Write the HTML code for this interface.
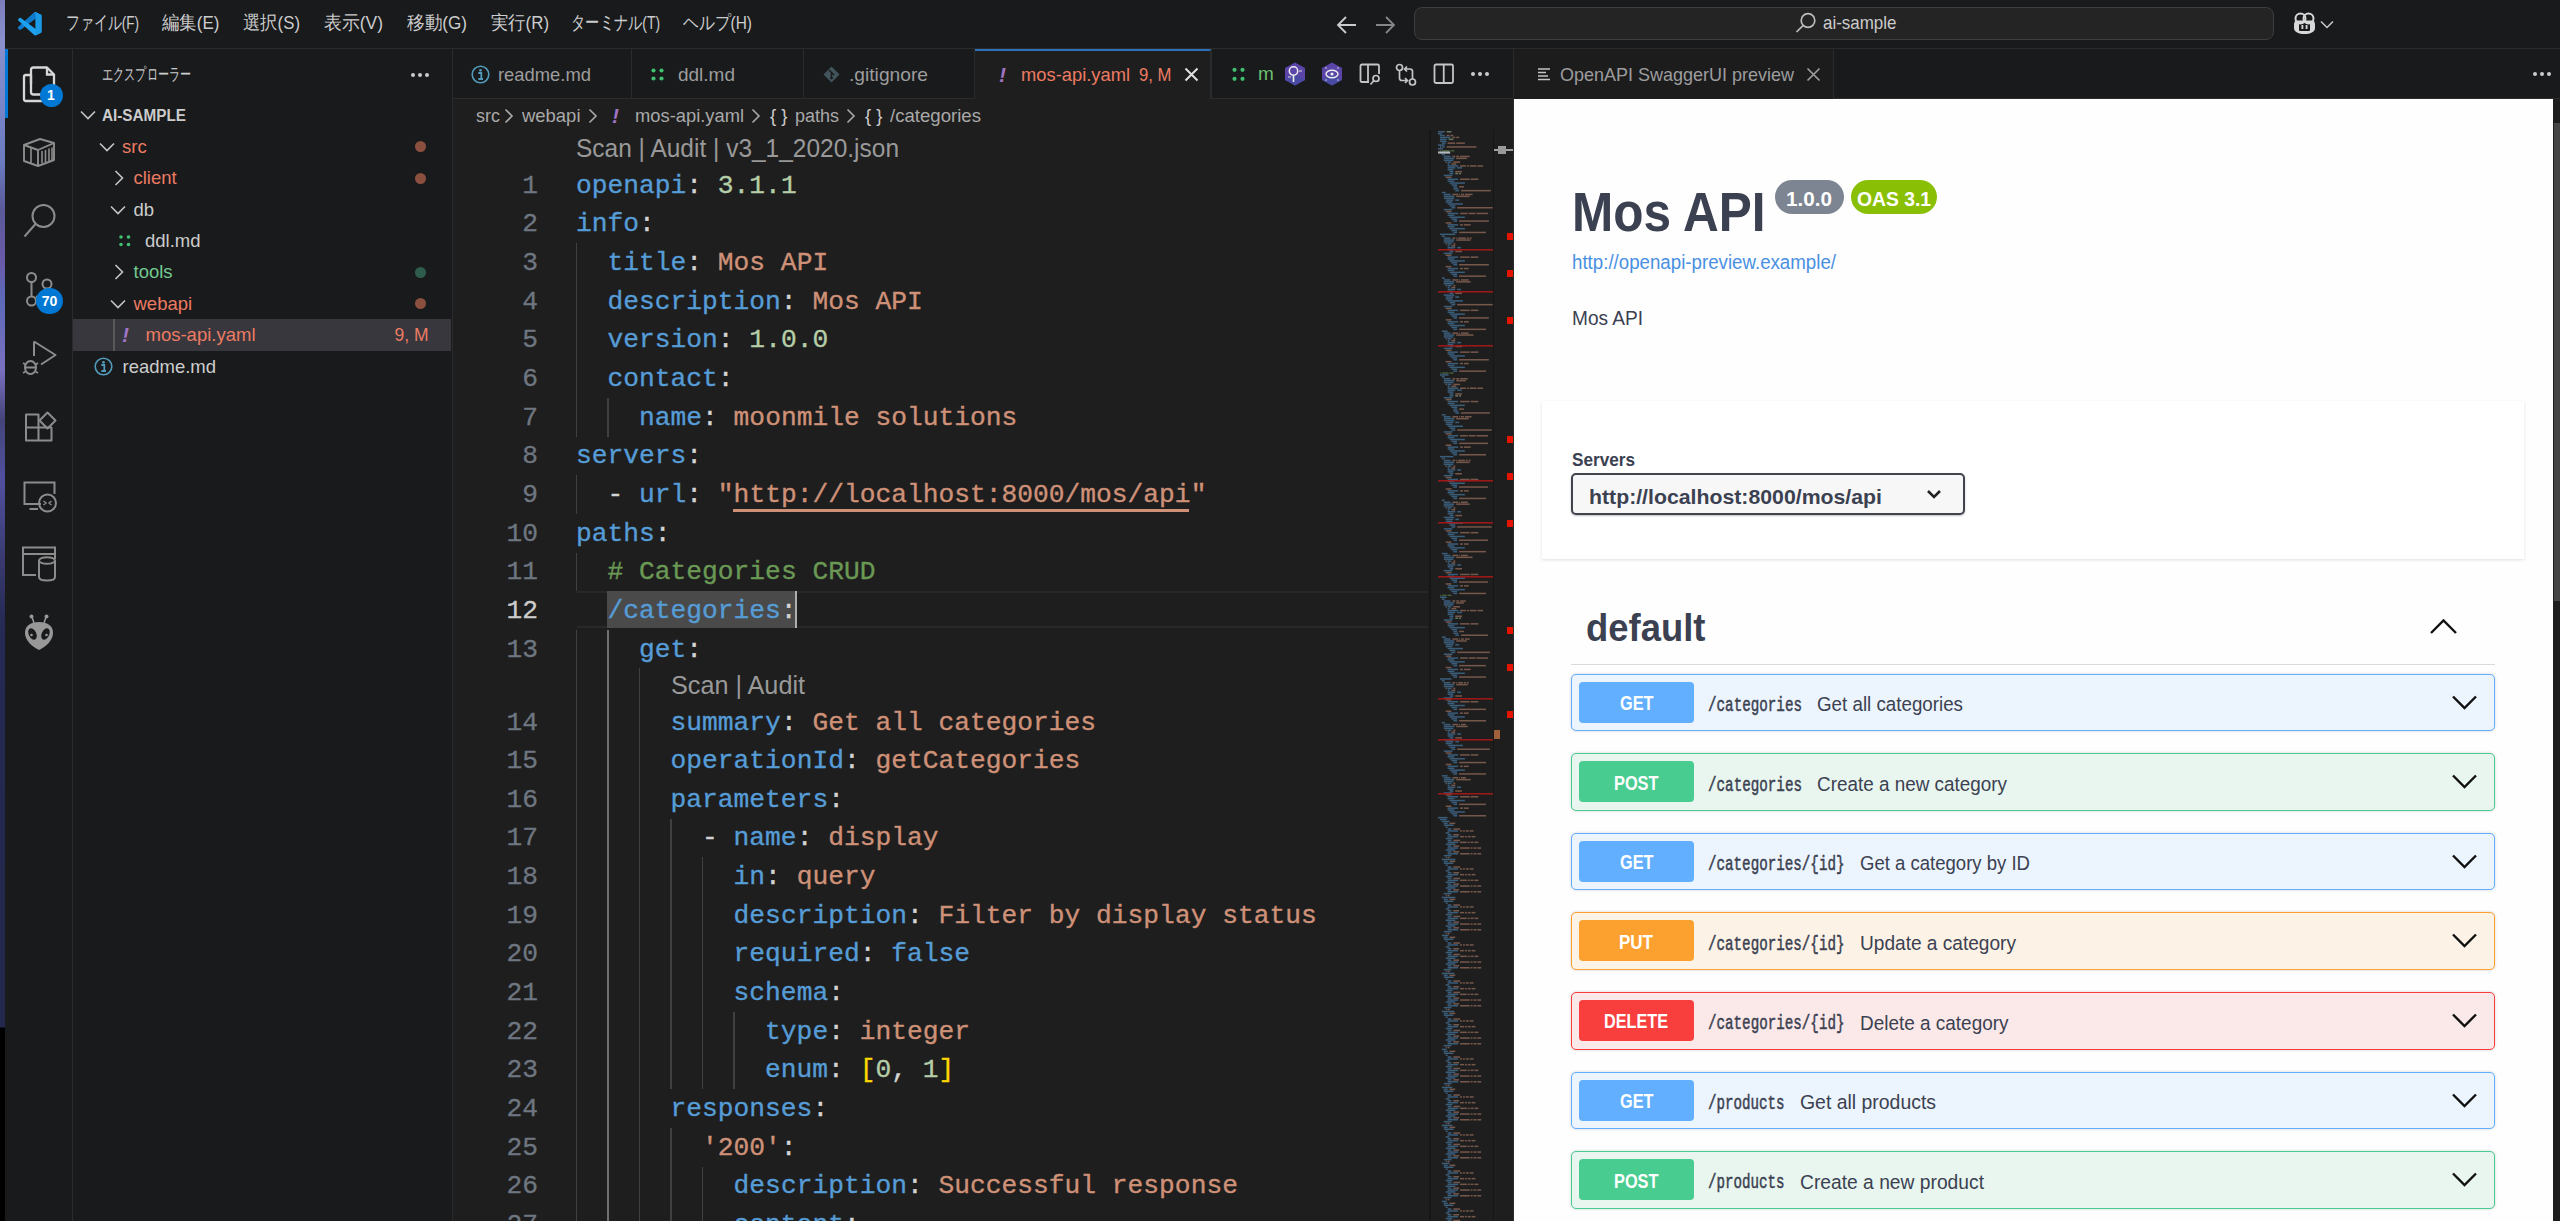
<!DOCTYPE html><html><head><meta charset="utf-8"><style>
*{margin:0;padding:0;box-sizing:border-box}
html,body{width:2560px;height:1221px;overflow:hidden;background:#1a1b1d;font-family:"Liberation Sans",sans-serif;}
.a{position:absolute}
.ui{font-size:18.5px;color:#cccccc;white-space:nowrap}
.mono{font-family:"Liberation Mono",monospace}
.code{font-family:"Liberation Mono",monospace;font-size:26.26px;-webkit-text-stroke:0.35px;white-space:pre;line-height:38.65px;height:38.65px;color:#d4d4d4}
.k{color:#569cd6}.s{color:#ce9178}.n{color:#b5cea8}.c{color:#6a9955}.p{color:#d4d4d4}.y{color:#ffd700}
.ln{font-family:"Liberation Mono",monospace;font-size:26.26px;-webkit-text-stroke:0.3px;color:#6e7681;text-align:right;width:80px;line-height:38.65px;height:38.65px}
.lens{font-size:25.5px;color:#999999;white-space:nowrap}
.fit{display:inline-block;transform-origin:0 50%;white-space:nowrap;overflow:visible}
.guide{position:absolute;width:1.5px;background:#404040}
svg{position:absolute;overflow:visible}
</style></head><body><div class="a" style="left:0;top:0;width:5px;height:1221px;background:linear-gradient(180deg,#7c7cbc 0px,#8a90cc 40px,#7a86c8 100px,#6b7cc0 160px,#5a5a9a 210px,#6a5aa8 260px,#5c6ab8 300px,#7a70c0 370px,#44447a 420px,#5050a0 480px,#3a3a70 560px,#262a55 620px,#23284e 800px,#24284c 1027px,#000 1028px,#000 1221px)"></div><div class="a" style="left:5px;top:0;width:2555px;height:49px;background:#191a1c;border-bottom:1px solid #2b2b2b"></div><div class="a" style="left:5px;top:49px;width:68px;height:1172px;background:#191a1c;border-right:1px solid #2b2b2b"></div><div class="a" style="left:5px;top:49px;width:3px;height:69px;background:#0078d4"></div><div class="a" style="left:73px;top:49px;width:380px;height:1172px;background:#191a1c;border-right:1px solid #2b2b2b"></div><div class="a" style="left:453px;top:49px;width:1060px;height:1172px;background:#1e1e1e"></div><div class="a" style="left:453px;top:49px;width:1060px;height:50px;background:#191a1c;border-bottom:1px solid #2b2b2b"></div><div class="a" style="left:1513px;top:49px;width:1047px;height:50px;background:#191a1c;border-bottom:1px solid #2b2b2b"></div><div class="a" id="sw" style="left:1513px;top:99px;width:1040px;height:1122px;background:#fefefe;overflow:hidden"></div><div class="a" style="left:2553px;top:99px;width:7px;height:1122px;background:#1e1e1e"></div><div class="a" style="left:2554px;top:123px;width:6px;height:478px;background:#464646"></div><svg style="left:18px;top:12px" width="23.5" height="23.5" viewBox="0 0 100 100">
<path d="M96.46 10.8 L75.86 0.87 C73.47 -0.28 70.62 0.2 68.75 2.08 L29.3 38.06 L12.12 25.01 C10.52 23.8 8.28 23.9 6.8 25.25 L1.28 30.27 C-0.53 31.93 -0.53 34.78 1.28 36.43 L16.18 50 L1.28 63.57 C-0.53 65.22 -0.53 68.07 1.28 69.73 L6.8 74.75 C8.28 76.1 10.52 76.2 12.12 74.99 L29.3 61.94 L68.75 97.92 C70.62 99.8 73.47 100.28 75.86 99.13 L96.46 89.2 C98.6 88.17 100 86 100 83.62 V16.38 C100 14 98.6 11.83 96.46 10.8 Z M75.01 72.7 L45.1 50 L75.01 27.3 Z" fill="#1ea2f0" fill-rule="evenodd"/>
<path d="M75.86 0.87 L96.46 10.8 C98.6 11.83 100 14 100 16.38 V83.62 C100 86 98.6 88.17 96.46 89.2 L75.86 99.13 C73.47 100.28 72 99 75 96 V4 C72 1 73.47 -0.28 75.86 0.87 Z" fill="#1b9be6"/>
<path d="M29.3 38.06 L68.75 2.08 L75 4 V27.3 L45.1 50 Z" fill="#0a6cc0" opacity="0.75"/><path d="M16.18 50 L1.28 63.57 C-0.53 65.22 -0.53 68.07 1.28 69.73 L6.8 74.75 C8.28 76.1 10.52 76.2 12.12 74.99 L29.3 61.94 L22 55 Z" fill="#0a6cc0" opacity="0.75"/>
</svg>
<div class="a ui" style="left:66px;top:11px;font-size:18.5px;line-height:24px;color:#cccccc"><span class="fit" style="width:73px">ファイル(F)</span></div>
<div class="a ui" style="left:162px;top:11px;font-size:18.5px;line-height:24px;color:#cccccc"><span class="fit" style="width:57.5px">編集(E)</span></div>
<div class="a ui" style="left:243px;top:11px;font-size:18.5px;line-height:24px;color:#cccccc"><span class="fit" style="width:57px">選択(S)</span></div>
<div class="a ui" style="left:324px;top:11px;font-size:18.5px;line-height:24px;color:#cccccc"><span class="fit" style="width:59px">表示(V)</span></div>
<div class="a ui" style="left:407px;top:11px;font-size:18.5px;line-height:24px;color:#cccccc"><span class="fit" style="width:60px">移動(G)</span></div>
<div class="a ui" style="left:491px;top:11px;font-size:18.5px;line-height:24px;color:#cccccc"><span class="fit" style="width:58px">実行(R)</span></div>
<div class="a ui" style="left:571px;top:11px;font-size:18.5px;line-height:24px;color:#cccccc"><span class="fit" style="width:89px">ターミナル(T)</span></div>
<div class="a ui" style="left:683px;top:11px;font-size:18.5px;line-height:24px;color:#cccccc"><span class="fit" style="width:69px">ヘルプ(H)</span></div>
<svg style="left:1336px;top:15px" width="22" height="20" viewBox="0 0 22 20"><path d="M10 2 L2 10 L10 18 M2 10 H20" stroke="#cccccc" stroke-width="1.8" fill="none"/></svg>
<svg style="left:1374px;top:15px" width="22" height="20" viewBox="0 0 22 20"><path d="M12 2 L20 10 L12 18 M20 10 H2" stroke="#868686" stroke-width="1.8" fill="none"/></svg>
<div class="a" style="left:1414px;top:7px;width:860px;height:33px;background:#242424;border:1.5px solid #3e3e3e;border-radius:8px"></div>
<svg style="left:1795px;top:12px" width="22" height="22" viewBox="0 0 22 22"><circle cx="13" cy="8.5" r="6.8" stroke="#bdbdbd" stroke-width="1.7" fill="none"/><path d="M8.2 13.3 L1.5 20" stroke="#bdbdbd" stroke-width="1.7"/></svg>
<div class="a ui" style="left:1823px;top:11px;line-height:24px;font-size:18.5px;color:#cccccc"><span class="fit" style="width:73.5px">ai-sample</span></div>
<svg style="left:2291px;top:12px" width="27" height="24" viewBox="0 0 27 24">
<path d="M3 13 C3 9 5 8.5 6.5 8.5 L20.5 8.5 C22 8.5 24 9 24 13 L24 16 C24 20 19 22 13.5 22 C8 22 3 20 3 16 Z" fill="#d8d8d8"/>
<rect x="8" y="11" width="11" height="8" rx="1" fill="#191a1c"/>
<rect x="10.5" y="13" width="1.8" height="4" fill="#d8d8d8"/><rect x="14.7" y="13" width="1.8" height="4" fill="#d8d8d8"/>
<ellipse cx="9.5" cy="6.5" rx="5" ry="5" fill="none" stroke="#d8d8d8" stroke-width="2"/>
<ellipse cx="17.5" cy="6.5" rx="5" ry="5" fill="none" stroke="#d8d8d8" stroke-width="2"/>
</svg>
<svg style="left:2320px;top:20px" width="14" height="9" viewBox="0 0 14 9"><path d="M1 1.5 L7 7.5 L13 1.5" stroke="#cccccc" stroke-width="1.5" fill="none"/></svg>
<svg style="left:20px;top:62px" width="40" height="44" viewBox="0 0 40 44">
<path d="M11 22 V8 Q11 5.5 13.5 5.5 H27 L34 12.5 V30" stroke="#d7d7d7" stroke-width="2.3" fill="none" stroke-linejoin="round"/>
<path d="M27 5.5 V12.5 H34" stroke="#d7d7d7" stroke-width="2.3" fill="none"/>
<path d="M11 13 H6 Q4 13 4 15 V37 Q4 39 6 39 H26" stroke="#d7d7d7" stroke-width="2.3" fill="none"/>
<path d="M11 13 V30 Q11 32.5 13.5 32.5 H22" stroke="#d7d7d7" stroke-width="2.3" fill="none"/>
</svg>
<div class="a" style="left:39.5px;top:84px;width:23px;height:23px;border-radius:50%;background:#0078d4;color:#fff;font:bold 14px/23px 'Liberation Sans',sans-serif;text-align:center">1</div>
<svg style="left:22px;top:137px" width="34" height="31" viewBox="0 0 34 31">
<path d="M2 8 L18 2 L32 6 V23 L16 29 L2 24 Z M2 8 L16 13 L32 6 M16 13 V29" stroke="#8c8c8c" stroke-width="1.9" fill="none" stroke-linejoin="round"/>
<path d="M9 11 V26 M20 14 V26 M23.5 13 V25 M27 11.5 V24 M30 10.5 V23" stroke="#8c8c8c" stroke-width="1.6"/>
</svg>
<svg style="left:22px;top:202px" width="36" height="38" viewBox="0 0 36 38"><circle cx="21.5" cy="14" r="11" stroke="#8c8c8c" stroke-width="2" fill="none"/><path d="M13.5 22 L2.5 34.5" stroke="#8c8c8c" stroke-width="2"/></svg>
<svg style="left:22px;top:270px" width="36" height="40" viewBox="0 0 36 40">
<circle cx="9.5" cy="7.5" r="4.5" stroke="#8c8c8c" stroke-width="2" fill="none"/>
<circle cx="25" cy="14" r="4.5" stroke="#8c8c8c" stroke-width="2" fill="none"/>
<circle cx="9.5" cy="31" r="4.5" stroke="#8c8c8c" stroke-width="2" fill="none"/>
<path d="M9.5 12 V26.5 M25 18.5 Q25 24 14 27" stroke="#8c8c8c" stroke-width="2" fill="none"/>
</svg>
<div class="a" style="left:36px;top:288px;width:27px;height:26px;border-radius:13px;background:#0078d4;color:#fff;font:bold 14px/26px 'Liberation Sans',sans-serif;text-align:center">70</div>
<svg style="left:20px;top:338px" width="40" height="40" viewBox="0 0 40 40">
<path d="M14 3.5 V18 M14 3.5 L35.5 17 L21 26.5" stroke="#8c8c8c" stroke-width="2" fill="none" stroke-linejoin="round"/>
<ellipse cx="10.5" cy="29.5" rx="5.5" ry="6.5" stroke="#8c8c8c" stroke-width="2" fill="none"/>
<path d="M5 29.5 H16 M3 25 L5.5 26.5 M18 25 L15.5 26.5 M3 35 L5.5 33.5 M18 35 L15.5 33.5" stroke="#8c8c8c" stroke-width="1.8" fill="none"/>
</svg>
<svg style="left:24px;top:411px" width="34" height="34" viewBox="0 0 34 34">
<path d="M2 3.5 H14.5 V29.5 H2 Z M2 16.5 H27.5 V29.5 H14.5 M14.5 16.5" stroke="#8c8c8c" stroke-width="2" fill="none" stroke-linejoin="round"/>
<path d="M23.5 1.5 L31.5 9.5 L23.5 17.5 L15.5 9.5 Z" stroke="#8c8c8c" stroke-width="2" fill="none" stroke-linejoin="round"/>
</svg>
<svg style="left:21px;top:480px" width="38" height="34" viewBox="0 0 38 34">
<path d="M20 24 H3.5 V2.5 H33.5 V14" stroke="#8c8c8c" stroke-width="2" fill="none"/>
<path d="M8.5 29 H17" stroke="#8c8c8c" stroke-width="2"/>
<circle cx="26.5" cy="23" r="8.5" stroke="#8c8c8c" stroke-width="2" fill="none"/>
<path d="M22.5 21 L25 23 L22.5 25 M30.5 21 L28 23 L30.5 25" stroke="#8c8c8c" stroke-width="1.4" fill="none"/>
</svg>
<svg style="left:20px;top:545px" width="38" height="38" viewBox="0 0 38 38">
<path d="M16 30 H3 V2.5 H35 V14" stroke="#8c8c8c" stroke-width="2" fill="none"/>
<path d="M3 9 H35" stroke="#8c8c8c" stroke-width="2"/>
<ellipse cx="27" cy="15.5" rx="8" ry="3.3" stroke="#8c8c8c" stroke-width="2" fill="none"/>
<path d="M19 15.5 V32 Q19 35.5 27 35.5 Q35 35.5 35 32 V15.5" stroke="#8c8c8c" stroke-width="2" fill="none"/>
</svg>
<svg style="left:23px;top:614px" width="32" height="38" viewBox="0 0 32 38">
<path d="M16 8 C25 8 30 12 30 19 C30 27 22 33 16 36 C10 33 2 27 2 19 C2 12 7 8 16 8 Z" fill="#989898"/>
<ellipse cx="9.5" cy="20" rx="3.8" ry="6" transform="rotate(-25 9.5 20)" fill="#191a1c"/>
<ellipse cx="22.5" cy="20" rx="3.8" ry="6" transform="rotate(25 22.5 20)" fill="#191a1c"/>
<circle cx="8.5" cy="21" r="1.3" fill="#989898"/><circle cx="23.5" cy="21" r="1.3" fill="#989898"/>
<path d="M9 3 L11 9 M23 3 L21 9" stroke="#989898" stroke-width="1.5"/>
<circle cx="8.5" cy="2.5" r="2" fill="#989898"/><circle cx="23.5" cy="2.5" r="2" fill="#989898"/>
</svg>
<div class="a ui" style="left:102px;top:64px;line-height:22px;font-size:17px;color:#cccccc"><span class="fit" style="width:89px">エクスプローラー</span></div>
<svg style="left:410px;top:72px" width="20" height="6" viewBox="0 0 20 6"><circle cx="3" cy="3" r="2" fill="#cccccc"/><circle cx="10" cy="3" r="2" fill="#cccccc"/><circle cx="17" cy="3" r="2" fill="#cccccc"/></svg>
<div class="a" style="left:73px;top:319.4px;width:378px;height:31.4px;background:#37373d"></div>
<div class="a" style="left:113px;top:319.4px;width:1.5px;height:31.4px;background:#585858"></div>
<svg style="left:80px;top:110.3px" width="16" height="10" viewBox="0 0 16 10"><path d="M1 1.5 L8 8.5 L15 1.5" stroke="#c5c5c5" stroke-width="1.6" fill="none"/></svg>
<div class="a ui" style="left:102px;top:104.3px;line-height:24px;color:#cccccc;font-weight:bold;font-size:16px"><span class="fit" style="width:84px">AI-SAMPLE</span></div>
<svg style="left:99px;top:141.7px" width="16" height="10" viewBox="0 0 16 10"><path d="M1 1.5 L8 8.5 L15 1.5" stroke="#c5c5c5" stroke-width="1.6" fill="none"/></svg>
<div class="a ui" style="left:122px;top:134.7px;line-height:24px;color:#ec7b63;">src</div>
<svg style="left:114px;top:170.09999999999997px" width="10" height="16" viewBox="0 0 10 16"><path d="M1.5 1 L8.5 8 L1.5 15" stroke="#c5c5c5" stroke-width="1.6" fill="none"/></svg>
<div class="a ui" style="left:133.5px;top:166.1px;line-height:24px;color:#ec7b63;">client</div>
<svg style="left:110px;top:204.49999999999997px" width="16" height="10" viewBox="0 0 16 10"><path d="M1 1.5 L8 8.5 L15 1.5" stroke="#c5c5c5" stroke-width="1.6" fill="none"/></svg>
<div class="a ui" style="left:133.5px;top:197.5px;line-height:24px;color:#cccccc;">db</div>
<svg style="left:118px;top:233.9px" width="14" height="14" viewBox="0 0 14 14"><circle cx="3" cy="3" r="1.8" fill="#3fbf6f"/><circle cx="10.5" cy="3" r="1.8" fill="#3fbf6f"/><circle cx="3" cy="10.5" r="1.8" fill="#3fbf6f"/><circle cx="10.5" cy="10.5" r="1.8" fill="#3fbf6f"/></svg>
<div class="a ui" style="left:145px;top:228.9px;line-height:24px;color:#cccccc;">ddl.md</div>
<svg style="left:114px;top:264.3px" width="10" height="16" viewBox="0 0 10 16"><path d="M1.5 1 L8.5 8 L1.5 15" stroke="#c5c5c5" stroke-width="1.6" fill="none"/></svg>
<div class="a ui" style="left:133.5px;top:260.3px;line-height:24px;color:#73c991;">tools</div>
<svg style="left:110px;top:298.7px" width="16" height="10" viewBox="0 0 16 10"><path d="M1 1.5 L8 8.5 L15 1.5" stroke="#c5c5c5" stroke-width="1.6" fill="none"/></svg>
<div class="a ui" style="left:133.5px;top:291.7px;line-height:24px;color:#ec7b63;">webapi</div>
<div class="a" style="left:122px;top:322.1px;font:italic bold 21px/26px 'Liberation Sans',sans-serif;color:#a074c4">!</div>
<div class="a ui" style="left:145.5px;top:323.1px;line-height:24px;color:#ec7b63;">mos-api.yaml</div>
<div class="a ui" style="left:394.5px;top:323.1px;line-height:24px;color:#ec7b63;font-size:17.5px">9, M</div>
<svg style="left:94px;top:357.0px" width="19" height="19" viewBox="0 0 19 19"><circle cx="9.5" cy="9.5" r="8.3" stroke="#519aba" stroke-width="1.6" fill="none"/><circle cx="9.5" cy="5.3" r="1.4" fill="#519aba"/><path d="M7.3 8 H10.3 V13.8 M7.3 14 H12" stroke="#519aba" stroke-width="1.8" fill="none"/></svg>
<div class="a ui" style="left:122.5px;top:354.5px;line-height:24px;color:#cccccc;">readme.md</div>
<div class="a" style="left:414.5px;top:141.2px;width:11px;height:11px;border-radius:50%;background:#8a4f3e"></div>
<div class="a" style="left:414.5px;top:172.6px;width:11px;height:11px;border-radius:50%;background:#8a4f3e"></div>
<div class="a" style="left:414.5px;top:266.8px;width:11px;height:11px;border-radius:50%;background:#2f5d4d"></div>
<div class="a" style="left:414.5px;top:298.2px;width:11px;height:11px;border-radius:50%;background:#8a4f3e"></div>
<div class="a" style="left:631px;top:49px;width:1px;height:49px;background:#2b2b2b"></div>
<div class="a" style="left:803px;top:49px;width:1px;height:49px;background:#2b2b2b"></div>
<div class="a" style="left:974px;top:49px;width:1px;height:49px;background:#2b2b2b"></div>
<div class="a" style="left:975px;top:49px;width:236px;height:50px;background:#1e1e1e;border-top:2px solid #2a70b8;border-right:1px solid #2b2b2b"></div>
<svg style="left:471px;top:65.0px" width="19" height="19" viewBox="0 0 19 19"><circle cx="9.5" cy="9.5" r="8.3" stroke="#519aba" stroke-width="1.6" fill="none"/><circle cx="9.5" cy="5.3" r="1.4" fill="#519aba"/><path d="M7.3 8 H10.3 V13.8 M7.3 14 H12" stroke="#519aba" stroke-width="1.8" fill="none"/></svg>
<div class="a ui" style="left:498px;top:62.5px;line-height:24px;font-size:18.5px;color:#9d9d9d;"><span class="fit" style="width:93px">readme.md</span></div>
<svg style="left:651px;top:68.0px" width="13" height="13" viewBox="0 0 13 13"><circle cx="2.5" cy="2.5" r="2.1" fill="#3fbf6f"/><circle cx="10.5" cy="2.5" r="2.1" fill="#3fbf6f"/><circle cx="2.5" cy="10.5" r="2.1" fill="#3fbf6f"/><circle cx="10.5" cy="10.5" r="2.1" fill="#3fbf6f"/></svg>
<div class="a ui" style="left:678px;top:62.5px;line-height:24px;font-size:18.5px;color:#9d9d9d;"><span class="fit" style="width:57px">ddl.md</span></div>
<svg style="left:823px;top:66.0px" width="17" height="17" viewBox="0 0 17 17"><path d="M8.5 0.5 L16.5 8.5 L8.5 16.5 L0.5 8.5 Z" fill="#41535b"/><path d="M6 4 L11 9 M8.5 6.5 V12.5" stroke="#191a1c" stroke-width="1.4"/><circle cx="8.5" cy="12" r="1.3" fill="#191a1c"/></svg>
<div class="a ui" style="left:849px;top:62.5px;line-height:24px;font-size:18.5px;color:#9d9d9d;"><span class="fit" style="width:79px">.gitignore</span></div>
<div class="a" style="left:999px;top:61.5px;font:italic bold 21px/26px 'Liberation Sans',sans-serif;color:#a074c4">!</div>
<div class="a ui" style="left:1021px;top:62.5px;line-height:24px;font-size:18.5px;color:#ec7b63;"><span class="fit" style="width:109px">mos-api.yaml</span></div>
<div class="a ui" style="left:1138.5px;top:62.5px;line-height:24px;font-size:17.5px;color:#ec7b63;"><span class="fit" style="width:32.5px">9, M</span></div>
<svg style="left:1184px;top:67.0px" width="15" height="15" viewBox="0 0 15 15"><path d="M1.5 1.5 L13.5 13.5 M13.5 1.5 L1.5 13.5" stroke="#e0e0e0" stroke-width="2"/></svg>
<div class="a" style="left:1211px;top:49px;width:1px;height:49px;background:#2b2b2b"></div>
<svg style="left:1232px;top:67px" width="13" height="15" viewBox="0 0 13 15"><circle cx="2.5" cy="2.8" r="2.1" fill="#3fbf6f"/><circle cx="10.5" cy="2.8" r="2.1" fill="#3fbf6f"/><circle cx="2.5" cy="11.8" r="2.1" fill="#3fbf6f"/><circle cx="10.5" cy="11.8" r="2.1" fill="#3fbf6f"/></svg>
<div class="a" style="left:1258px;top:62px;font:19px/24px 'Liberation Sans',sans-serif;color:#6cc06e">m</div>
<svg style="left:1284px;top:62px" width="22" height="24" viewBox="0 0 22 24"><path d="M11 0.5 L21 6 V18 L11 23.5 L1 18 V6 Z" fill="#5b45a8"/><path d="M11 12 L21 18 L11 23.5 L1 18 Z" fill="#3d4fa0" opacity="0.6"/><circle cx="9.5" cy="9" r="4.2" stroke="#eee" stroke-width="1.5" fill="none"/><path d="M9.5 13.2 V20" stroke="#eee" stroke-width="1.6"/><path d="M4 15 H7 M15 9 H18" stroke="#ddd" stroke-width="1"/></svg>
<svg style="left:1321px;top:62px" width="22" height="24" viewBox="0 0 22 24"><path d="M11 0.5 L21 6 V18 L11 23.5 L1 18 V6 Z" fill="#5b45a8"/><path d="M11 12 L21 18 L11 23.5 L1 18 Z" fill="#3d4fa0" opacity="0.6"/><ellipse cx="11" cy="12" rx="6" ry="3.8" stroke="#eee" stroke-width="1.4" fill="none"/><circle cx="11" cy="12" r="1.6" fill="#eee"/><circle cx="5" cy="6" r="0.8" fill="#ddd"/><circle cx="17" cy="6" r="0.8" fill="#ddd"/><circle cx="5" cy="18" r="0.8" fill="#ddd"/><circle cx="17" cy="18" r="0.8" fill="#ddd"/></svg>
<svg style="left:1359px;top:63px" width="23" height="23" viewBox="0 0 23 23"><path d="M10 19 H3 Q1.5 19 1.5 17.5 V3 Q1.5 1.5 3 1.5 H18.5 Q20 1.5 20 3 V11 M9 1.5 V19" stroke="#c5c5c5" stroke-width="1.8" fill="none"/><circle cx="17" cy="15.5" r="3" stroke="#c5c5c5" stroke-width="1.7" fill="none"/><path d="M14.8 17.8 L11.5 21.5" stroke="#c5c5c5" stroke-width="1.7"/></svg>
<svg style="left:1395px;top:63px" width="23" height="24" viewBox="0 0 23 24"><circle cx="4.5" cy="4.5" r="3" stroke="#c5c5c5" stroke-width="1.7" fill="none"/><circle cx="17.5" cy="19" r="3" stroke="#c5c5c5" stroke-width="1.7" fill="none"/><path d="M4.5 7.5 V15 Q4.5 17.5 7 17.5 H12 M10 15 L12.5 17.5 L10 20" stroke="#c5c5c5" stroke-width="1.7" fill="none"/><path d="M17.5 16 V8.5 Q17.5 6 15 6 H10 M12 3.5 L9.5 6 L12 8.5" stroke="#c5c5c5" stroke-width="1.7" fill="none"/></svg>
<svg style="left:1433px;top:63px" width="22" height="22" viewBox="0 0 22 22"><rect x="1.5" y="1.5" width="18.5" height="18.5" rx="1.5" stroke="#c5c5c5" stroke-width="1.8" fill="none"/><path d="M10.75 1.5 V20" stroke="#c5c5c5" stroke-width="1.8"/></svg>
<svg style="left:1470px;top:71px" width="20" height="6" viewBox="0 0 20 6"><circle cx="3" cy="3" r="2" fill="#cccccc"/><circle cx="10" cy="3" r="2" fill="#cccccc"/><circle cx="17" cy="3" r="2" fill="#cccccc"/></svg>
<div class="a" style="left:1513px;top:49px;width:1px;height:1172px;background:#2b2b2b"></div>
<div class="a" style="left:1514px;top:49px;width:320px;height:50px;background:#1c1c1d;border-right:1px solid #2b2b2b"></div>
<svg style="left:1537px;top:67px" width="14" height="15" viewBox="0 0 14 15"><path d="M1 2 H13 M1 5.5 H9 M1 9 H11 M1 12.5 H13" stroke="#c5c5c5" stroke-width="1.6"/></svg>
<div class="a ui" style="left:1559.5px;top:62.5px;line-height:24px;font-size:18.5px;color:#9d9d9d;"><span class="fit" style="width:234px">OpenAPI SwaggerUI preview</span></div>
<svg style="left:1806px;top:67.0px" width="15" height="15" viewBox="0 0 15 15"><path d="M1.5 1.5 L13.5 13.5 M13.5 1.5 L1.5 13.5" stroke="#9d9d9d" stroke-width="1.7"/></svg>
<svg style="left:2532px;top:71px" width="20" height="6" viewBox="0 0 20 6"><circle cx="3" cy="3" r="2" fill="#cccccc"/><circle cx="10" cy="3" r="2" fill="#cccccc"/><circle cx="17" cy="3" r="2" fill="#cccccc"/></svg>
<div class="a ui" style="left:475.5px;top:103.5px;line-height:24px;font-size:18.5px;color:#a9a9a9;"><span class="fit" style="width:24px">src</span></div>
<svg style="left:504px;top:107.5px" width="10" height="16" viewBox="0 0 10 16"><path d="M1.5 1.5 L8 8 L1.5 14.5" stroke="#a9a9a9" stroke-width="1.6" fill="none"/></svg>
<div class="a ui" style="left:521.5px;top:103.5px;line-height:24px;font-size:18.5px;color:#a9a9a9;"><span class="fit" style="width:58.5px">webapi</span></div>
<svg style="left:588px;top:107.5px" width="10" height="16" viewBox="0 0 10 16"><path d="M1.5 1.5 L8 8 L1.5 14.5" stroke="#a9a9a9" stroke-width="1.6" fill="none"/></svg>
<div class="a" style="left:612px;top:102.5px;font:italic bold 21px/26px 'Liberation Sans',sans-serif;color:#a074c4">!</div>
<div class="a ui" style="left:634.5px;top:103.5px;line-height:24px;font-size:18.5px;color:#a9a9a9;"><span class="fit" style="width:109px">mos-api.yaml</span></div>
<svg style="left:751px;top:107.5px" width="10" height="16" viewBox="0 0 10 16"><path d="M1.5 1.5 L8 8 L1.5 14.5" stroke="#a9a9a9" stroke-width="1.6" fill="none"/></svg>
<div class="a ui" style="left:770px;top:103.5px;line-height:24px;font-size:18.5px;color:#cccccc;"><span class="fit" style="width:17.5px">{ }</span></div>
<div class="a ui" style="left:795px;top:103.5px;line-height:24px;font-size:18.5px;color:#a9a9a9;"><span class="fit" style="width:44px">paths</span></div>
<svg style="left:846px;top:107.5px" width="10" height="16" viewBox="0 0 10 16"><path d="M1.5 1.5 L8 8 L1.5 14.5" stroke="#a9a9a9" stroke-width="1.6" fill="none"/></svg>
<div class="a ui" style="left:865px;top:103.5px;line-height:24px;font-size:18.5px;color:#cccccc;"><span class="fit" style="width:17.5px">{ }</span></div>
<div class="a ui" style="left:890px;top:103.5px;line-height:24px;font-size:18.5px;color:#a9a9a9;"><span class="fit" style="width:91px">/categories</span></div>
<div class="a" style="left:577px;top:591.1px;width:851px;height:37px;border-top:2px solid #282828;border-bottom:2px solid #282828"></div>
<div class="a" style="left:607px;top:591.1px;width:189px;height:37px;background:#4a4a4a"></div>
<div class="a" style="left:795px;top:591.1px;width:2px;height:37px;background:#aeafad"></div>
<div class="guide" style="left:575.5px;top:243.3px;height:38.65px;background:#404040"></div>
<div class="guide" style="left:575.5px;top:281.9px;height:38.65px;background:#404040"></div>
<div class="guide" style="left:575.5px;top:320.6px;height:38.65px;background:#404040"></div>
<div class="guide" style="left:575.5px;top:359.2px;height:38.65px;background:#404040"></div>
<div class="guide" style="left:575.5px;top:397.9px;height:38.65px;background:#404040"></div>
<div class="guide" style="left:607.0px;top:397.9px;height:38.65px;background:#404040"></div>
<div class="guide" style="left:575.5px;top:475.2px;height:38.65px;background:#404040"></div>
<div class="guide" style="left:575.5px;top:552.5px;height:38.65px;background:#404040"></div>
<div class="guide" style="left:575.5px;top:629.8px;height:38.65px;background:#404040"></div>
<div class="guide" style="left:607.0px;top:629.8px;height:38.65px;background:#707070"></div>
<div class="guide" style="left:575.5px;top:668.4px;height:73.00px;background:#404040"></div>
<div class="guide" style="left:607.0px;top:668.4px;height:73.00px;background:#707070"></div>
<div class="guide" style="left:638.5px;top:668.4px;height:73.00px;background:#404040"></div>
<div class="guide" style="left:575.5px;top:741.4px;height:38.65px;background:#404040"></div>
<div class="guide" style="left:607.0px;top:741.4px;height:38.65px;background:#707070"></div>
<div class="guide" style="left:638.5px;top:741.4px;height:38.65px;background:#404040"></div>
<div class="guide" style="left:575.5px;top:780.1px;height:38.65px;background:#404040"></div>
<div class="guide" style="left:607.0px;top:780.1px;height:38.65px;background:#707070"></div>
<div class="guide" style="left:638.5px;top:780.1px;height:38.65px;background:#404040"></div>
<div class="guide" style="left:575.5px;top:818.8px;height:38.65px;background:#404040"></div>
<div class="guide" style="left:607.0px;top:818.8px;height:38.65px;background:#707070"></div>
<div class="guide" style="left:638.5px;top:818.8px;height:38.65px;background:#404040"></div>
<div class="guide" style="left:670.1px;top:818.8px;height:38.65px;background:#404040"></div>
<div class="guide" style="left:575.5px;top:857.4px;height:38.65px;background:#404040"></div>
<div class="guide" style="left:607.0px;top:857.4px;height:38.65px;background:#707070"></div>
<div class="guide" style="left:638.5px;top:857.4px;height:38.65px;background:#404040"></div>
<div class="guide" style="left:670.1px;top:857.4px;height:38.65px;background:#404040"></div>
<div class="guide" style="left:701.6px;top:857.4px;height:38.65px;background:#404040"></div>
<div class="guide" style="left:575.5px;top:896.0px;height:38.65px;background:#404040"></div>
<div class="guide" style="left:607.0px;top:896.0px;height:38.65px;background:#707070"></div>
<div class="guide" style="left:638.5px;top:896.0px;height:38.65px;background:#404040"></div>
<div class="guide" style="left:670.1px;top:896.0px;height:38.65px;background:#404040"></div>
<div class="guide" style="left:701.6px;top:896.0px;height:38.65px;background:#404040"></div>
<div class="guide" style="left:575.5px;top:934.7px;height:38.65px;background:#404040"></div>
<div class="guide" style="left:607.0px;top:934.7px;height:38.65px;background:#707070"></div>
<div class="guide" style="left:638.5px;top:934.7px;height:38.65px;background:#404040"></div>
<div class="guide" style="left:670.1px;top:934.7px;height:38.65px;background:#404040"></div>
<div class="guide" style="left:701.6px;top:934.7px;height:38.65px;background:#404040"></div>
<div class="guide" style="left:575.5px;top:973.3px;height:38.65px;background:#404040"></div>
<div class="guide" style="left:607.0px;top:973.3px;height:38.65px;background:#707070"></div>
<div class="guide" style="left:638.5px;top:973.3px;height:38.65px;background:#404040"></div>
<div class="guide" style="left:670.1px;top:973.3px;height:38.65px;background:#404040"></div>
<div class="guide" style="left:701.6px;top:973.3px;height:38.65px;background:#404040"></div>
<div class="guide" style="left:575.5px;top:1012.0px;height:38.65px;background:#404040"></div>
<div class="guide" style="left:607.0px;top:1012.0px;height:38.65px;background:#707070"></div>
<div class="guide" style="left:638.5px;top:1012.0px;height:38.65px;background:#404040"></div>
<div class="guide" style="left:670.1px;top:1012.0px;height:38.65px;background:#404040"></div>
<div class="guide" style="left:701.6px;top:1012.0px;height:38.65px;background:#404040"></div>
<div class="guide" style="left:733.1px;top:1012.0px;height:38.65px;background:#404040"></div>
<div class="guide" style="left:575.5px;top:1050.6px;height:38.65px;background:#404040"></div>
<div class="guide" style="left:607.0px;top:1050.6px;height:38.65px;background:#707070"></div>
<div class="guide" style="left:638.5px;top:1050.6px;height:38.65px;background:#404040"></div>
<div class="guide" style="left:670.1px;top:1050.6px;height:38.65px;background:#404040"></div>
<div class="guide" style="left:701.6px;top:1050.6px;height:38.65px;background:#404040"></div>
<div class="guide" style="left:733.1px;top:1050.6px;height:38.65px;background:#404040"></div>
<div class="guide" style="left:575.5px;top:1089.3px;height:38.65px;background:#404040"></div>
<div class="guide" style="left:607.0px;top:1089.3px;height:38.65px;background:#707070"></div>
<div class="guide" style="left:638.5px;top:1089.3px;height:38.65px;background:#404040"></div>
<div class="guide" style="left:575.5px;top:1127.9px;height:38.65px;background:#404040"></div>
<div class="guide" style="left:607.0px;top:1127.9px;height:38.65px;background:#707070"></div>
<div class="guide" style="left:638.5px;top:1127.9px;height:38.65px;background:#404040"></div>
<div class="guide" style="left:670.1px;top:1127.9px;height:38.65px;background:#404040"></div>
<div class="guide" style="left:575.5px;top:1166.6px;height:38.65px;background:#404040"></div>
<div class="guide" style="left:607.0px;top:1166.6px;height:38.65px;background:#707070"></div>
<div class="guide" style="left:638.5px;top:1166.6px;height:38.65px;background:#404040"></div>
<div class="guide" style="left:670.1px;top:1166.6px;height:38.65px;background:#404040"></div>
<div class="guide" style="left:701.6px;top:1166.6px;height:38.65px;background:#404040"></div>
<div class="guide" style="left:575.5px;top:1205.2px;height:38.65px;background:#404040"></div>
<div class="guide" style="left:607.0px;top:1205.2px;height:38.65px;background:#707070"></div>
<div class="guide" style="left:638.5px;top:1205.2px;height:38.65px;background:#404040"></div>
<div class="guide" style="left:670.1px;top:1205.2px;height:38.65px;background:#404040"></div>
<div class="guide" style="left:701.6px;top:1205.2px;height:38.65px;background:#404040"></div>
<div class="a ln" style="left:458px;top:166.70px;color:#6e7681">1</div>
<div class="a code" style="left:576.0px;top:166.70px"><span class="fit" style="width:220.64px;white-space:pre"><span class="k">openapi</span><span class="p">: </span><span class="n">3.1.1</span></span></div>
<div class="a ln" style="left:458px;top:205.35px;color:#6e7681">2</div>
<div class="a code" style="left:576.0px;top:205.35px"><span class="fit" style="width:78.80px;white-space:pre"><span class="k">info</span><span class="p">:</span></span></div>
<div class="a ln" style="left:458px;top:244.00px;color:#6e7681">3</div>
<div class="a code" style="left:576.0px;top:244.00px"><span class="fit" style="width:252.16px;white-space:pre"><span class="p">  </span><span class="k">title</span><span class="p">: </span><span class="s">Mos API</span></span></div>
<div class="a ln" style="left:458px;top:282.65px;color:#6e7681">4</div>
<div class="a code" style="left:576.0px;top:282.65px"><span class="fit" style="width:346.72px;white-space:pre"><span class="p">  </span><span class="k">description</span><span class="p">: </span><span class="s">Mos API</span></span></div>
<div class="a ln" style="left:458px;top:321.30px;color:#6e7681">5</div>
<div class="a code" style="left:576.0px;top:321.30px"><span class="fit" style="width:252.16px;white-space:pre"><span class="p">  </span><span class="k">version</span><span class="p">: </span><span class="n">1.0.0</span></span></div>
<div class="a ln" style="left:458px;top:359.95px;color:#6e7681">6</div>
<div class="a code" style="left:576.0px;top:359.95px"><span class="fit" style="width:157.60px;white-space:pre"><span class="p">  </span><span class="k">contact</span><span class="p">:</span></span></div>
<div class="a ln" style="left:458px;top:398.60px;color:#6e7681">7</div>
<div class="a code" style="left:576.0px;top:398.60px"><span class="fit" style="width:441.28px;white-space:pre"><span class="p">    </span><span class="k">name</span><span class="p">: </span><span class="s">moonmile solutions</span></span></div>
<div class="a ln" style="left:458px;top:437.25px;color:#6e7681">8</div>
<div class="a code" style="left:576.0px;top:437.25px"><span class="fit" style="width:126.08px;white-space:pre"><span class="k">servers</span><span class="p">:</span></span></div>
<div class="a ln" style="left:458px;top:475.90px;color:#6e7681">9</div>
<div class="a code" style="left:576.0px;top:475.90px"><span class="fit" style="width:630.40px;white-space:pre"><span class="p">  - </span><span class="k">url</span><span class="p">: </span><span class="s">&quot;</span><span class="s">http://localhost:8000/mos/api</span><span class="s">&quot;</span></span></div>
<div class="a ln" style="left:458px;top:514.55px;color:#6e7681">10</div>
<div class="a code" style="left:576.0px;top:514.55px"><span class="fit" style="width:94.56px;white-space:pre"><span class="k">paths</span><span class="p">:</span></span></div>
<div class="a ln" style="left:458px;top:553.20px;color:#6e7681">11</div>
<div class="a code" style="left:576.0px;top:553.20px"><span class="fit" style="width:299.44px;white-space:pre"><span class="p">  </span><span class="c"># Categories CRUD</span></span></div>
<div class="a ln" style="left:458px;top:591.85px;color:#cccccc">12</div>
<div class="a code" style="left:576.0px;top:591.85px"><span class="fit" style="width:220.64px;white-space:pre"><span class="p">  </span><span class="k">/categories</span><span class="p">:</span></span></div>
<div class="a ln" style="left:458px;top:630.50px;color:#6e7681">13</div>
<div class="a code" style="left:576.0px;top:630.50px"><span class="fit" style="width:126.08px;white-space:pre"><span class="p">    </span><span class="k">get</span><span class="p">:</span></span></div>
<div class="a ln" style="left:458px;top:703.50px;color:#6e7681">14</div>
<div class="a code" style="left:576.0px;top:703.50px"><span class="fit" style="width:520.08px;white-space:pre"><span class="p">      </span><span class="k">summary</span><span class="p">: </span><span class="s">Get all categories</span></span></div>
<div class="a ln" style="left:458px;top:742.15px;color:#6e7681">15</div>
<div class="a code" style="left:576.0px;top:742.15px"><span class="fit" style="width:504.32px;white-space:pre"><span class="p">      </span><span class="k">operationId</span><span class="p">: </span><span class="s">getCategories</span></span></div>
<div class="a ln" style="left:458px;top:780.80px;color:#6e7681">16</div>
<div class="a code" style="left:576.0px;top:780.80px"><span class="fit" style="width:267.92px;white-space:pre"><span class="p">      </span><span class="k">parameters</span><span class="p">:</span></span></div>
<div class="a ln" style="left:458px;top:819.45px;color:#6e7681">17</div>
<div class="a code" style="left:576.0px;top:819.45px"><span class="fit" style="width:362.48px;white-space:pre"><span class="p">        - </span><span class="k">name</span><span class="p">: </span><span class="s">display</span></span></div>
<div class="a ln" style="left:458px;top:858.10px;color:#6e7681">18</div>
<div class="a code" style="left:576.0px;top:858.10px"><span class="fit" style="width:299.44px;white-space:pre"><span class="p">          </span><span class="k">in</span><span class="p">: </span><span class="s">query</span></span></div>
<div class="a ln" style="left:458px;top:896.75px;color:#6e7681">19</div>
<div class="a code" style="left:576.0px;top:896.75px"><span class="fit" style="width:740.72px;white-space:pre"><span class="p">          </span><span class="k">description</span><span class="p">: </span><span class="s">Filter by display status</span></span></div>
<div class="a ln" style="left:458px;top:935.40px;color:#6e7681">20</div>
<div class="a code" style="left:576.0px;top:935.40px"><span class="fit" style="width:394.00px;white-space:pre"><span class="p">          </span><span class="k">required</span><span class="p">: </span><span class="k">false</span></span></div>
<div class="a ln" style="left:458px;top:974.05px;color:#6e7681">21</div>
<div class="a code" style="left:576.0px;top:974.05px"><span class="fit" style="width:267.92px;white-space:pre"><span class="p">          </span><span class="k">schema</span><span class="p">:</span></span></div>
<div class="a ln" style="left:458px;top:1012.70px;color:#6e7681">22</div>
<div class="a code" style="left:576.0px;top:1012.70px"><span class="fit" style="width:394.00px;white-space:pre"><span class="p">            </span><span class="k">type</span><span class="p">: </span><span class="s">integer</span></span></div>
<div class="a ln" style="left:458px;top:1051.35px;color:#6e7681">23</div>
<div class="a code" style="left:576.0px;top:1051.35px"><span class="fit" style="width:378.24px;white-space:pre"><span class="p">            </span><span class="k">enum</span><span class="p">: </span><span class="y">[</span><span class="n">0</span><span class="p">, </span><span class="n">1</span><span class="y">]</span></span></div>
<div class="a ln" style="left:458px;top:1090.00px;color:#6e7681">24</div>
<div class="a code" style="left:576.0px;top:1090.00px"><span class="fit" style="width:252.16px;white-space:pre"><span class="p">      </span><span class="k">responses</span><span class="p">:</span></span></div>
<div class="a ln" style="left:458px;top:1128.65px;color:#6e7681">25</div>
<div class="a code" style="left:576.0px;top:1128.65px"><span class="fit" style="width:220.64px;white-space:pre"><span class="p">        </span><span class="s">&#x27;200&#x27;</span><span class="p">:</span></span></div>
<div class="a ln" style="left:458px;top:1167.30px;color:#6e7681">26</div>
<div class="a code" style="left:576.0px;top:1167.30px"><span class="fit" style="width:661.92px;white-space:pre"><span class="p">          </span><span class="k">description</span><span class="p">: </span><span class="s">Successful response</span></span></div>
<div class="a ln" style="left:458px;top:1205.95px;color:#6e7681">27</div>
<div class="a code" style="left:576.0px;top:1205.95px"><span class="fit" style="width:283.68px;white-space:pre"><span class="p">          </span><span class="k">content</span><span class="p">:</span></span></div>
<div class="a" style="left:732.5px;top:509px;width:456px;height:2.6px;background:#ce9178"></div>
<div class="a lens" style="left:576px;top:130px;line-height:36px"><span class="fit" style="width:323px">Scan | Audit | v3_1_2020.json</span></div>
<div class="a lens" style="left:670.5px;top:667px;line-height:36px"><span class="fit" style="width:134px">Scan | Audit</span></div>
<svg style="left:0;top:0" width="2560" height="1221" viewBox="0 0 2560 1221"><g opacity="0.5"><rect x="1438.00" y="131.00" width="6.72" height="1.5" fill="#569cd6"/><rect x="1446.64" y="131.00" width="4.80" height="1.5" fill="#b5cea8"/><rect x="1438.00" y="132.90" width="3.84" height="1.5" fill="#569cd6"/><rect x="1439.92" y="134.80" width="4.80" height="1.5" fill="#569cd6"/><rect x="1446.64" y="134.80" width="2.88" height="1.5" fill="#ce9178"/><rect x="1450.48" y="134.80" width="2.88" height="1.5" fill="#ce9178"/><rect x="1439.92" y="136.70" width="10.56" height="1.5" fill="#569cd6"/><rect x="1452.40" y="136.70" width="2.88" height="1.5" fill="#ce9178"/><rect x="1456.24" y="136.70" width="2.88" height="1.5" fill="#ce9178"/><rect x="1439.92" y="138.60" width="6.72" height="1.5" fill="#569cd6"/><rect x="1448.56" y="138.60" width="4.80" height="1.5" fill="#b5cea8"/><rect x="1439.92" y="140.50" width="6.72" height="1.5" fill="#569cd6"/><rect x="1441.84" y="142.40" width="3.84" height="1.5" fill="#569cd6"/><rect x="1447.60" y="142.40" width="7.68" height="1.5" fill="#ce9178"/><rect x="1456.24" y="142.40" width="8.64" height="1.5" fill="#ce9178"/><rect x="1438.00" y="144.30" width="6.72" height="1.5" fill="#569cd6"/><rect x="1439.92" y="146.20" width="0.96" height="1.5" fill="#d4d4d4"/><rect x="1441.84" y="146.20" width="2.88" height="1.5" fill="#569cd6"/><rect x="1446.64" y="146.20" width="29.76" height="1.5" fill="#ce9178"/><rect x="1438.00" y="148.10" width="4.80" height="1.5" fill="#569cd6"/><rect x="1439.92" y="150.00" width="0.96" height="1.5" fill="#6a9955"/><rect x="1441.84" y="150.00" width="7.68" height="1.5" fill="#6a9955"/><rect x="1450.48" y="150.00" width="3.84" height="1.5" fill="#6a9955"/><rect x="1439.92" y="151.90" width="10.56" height="1.5" fill="#569cd6"/><rect x="1441.84" y="153.80" width="2.88" height="1.5" fill="#569cd6"/><rect x="1443.76" y="155.70" width="6.72" height="1.5" fill="#569cd6"/><rect x="1452.40" y="155.70" width="2.88" height="1.5" fill="#ce9178"/><rect x="1456.24" y="155.70" width="2.88" height="1.5" fill="#ce9178"/><rect x="1460.08" y="155.70" width="9.60" height="1.5" fill="#ce9178"/><rect x="1443.76" y="157.60" width="10.56" height="1.5" fill="#569cd6"/><rect x="1456.24" y="157.60" width="10.56" height="1.5" fill="#ce9178"/><rect x="1443.76" y="159.50" width="9.60" height="1.5" fill="#569cd6"/><rect x="1445.68" y="161.40" width="0.96" height="1.5" fill="#d4d4d4"/><rect x="1447.60" y="161.40" width="3.84" height="1.5" fill="#569cd6"/><rect x="1453.36" y="161.40" width="6.72" height="1.5" fill="#ce9178"/><rect x="1447.60" y="163.30" width="1.92" height="1.5" fill="#569cd6"/><rect x="1451.44" y="163.30" width="4.80" height="1.5" fill="#ce9178"/><rect x="1447.60" y="165.20" width="10.56" height="1.5" fill="#569cd6"/><rect x="1460.08" y="165.20" width="5.76" height="1.5" fill="#ce9178"/><rect x="1466.80" y="165.20" width="1.92" height="1.5" fill="#ce9178"/><rect x="1469.68" y="165.20" width="6.72" height="1.5" fill="#ce9178"/><rect x="1477.36" y="165.20" width="5.76" height="1.5" fill="#ce9178"/><rect x="1447.60" y="167.10" width="7.68" height="1.5" fill="#569cd6"/><rect x="1457.20" y="167.10" width="4.80" height="1.5" fill="#569cd6"/><rect x="1447.60" y="169.00" width="5.76" height="1.5" fill="#569cd6"/><rect x="1449.52" y="170.90" width="3.84" height="1.5" fill="#569cd6"/><rect x="1455.28" y="170.90" width="6.72" height="1.5" fill="#ce9178"/><rect x="1449.52" y="172.80" width="3.84" height="1.5" fill="#569cd6"/><rect x="1455.28" y="172.80" width="2.88" height="1.5" fill="#b5cea8"/><rect x="1459.12" y="172.80" width="1.92" height="1.5" fill="#b5cea8"/><rect x="1443.76" y="174.70" width="8.64" height="1.5" fill="#569cd6"/><rect x="1445.68" y="176.60" width="5.76" height="1.5" fill="#ce9178"/><rect x="1447.60" y="178.50" width="10.56" height="1.5" fill="#569cd6"/><rect x="1460.08" y="178.50" width="9.60" height="1.5" fill="#ce9178"/><rect x="1470.64" y="178.50" width="7.68" height="1.5" fill="#ce9178"/><rect x="1447.60" y="180.40" width="6.72" height="1.5" fill="#569cd6"/><rect x="1449.52" y="182.30" width="15.36" height="1.5" fill="#569cd6"/><rect x="1451.44" y="184.20" width="5.76" height="1.5" fill="#569cd6"/><rect x="1453.36" y="186.10" width="3.84" height="1.5" fill="#569cd6"/><rect x="1459.12" y="186.10" width="4.80" height="1.5" fill="#ce9178"/><rect x="1453.36" y="188.00" width="4.80" height="1.5" fill="#569cd6"/><rect x="1455.28" y="189.90" width="3.84" height="1.5" fill="#569cd6"/><rect x="1461.04" y="189.90" width="29.76" height="1.5" fill="#ce9178"/><rect x="1441.84" y="191.80" width="3.84" height="1.5" fill="#569cd6"/><rect x="1443.76" y="193.70" width="6.72" height="1.5" fill="#569cd6"/><rect x="1452.40" y="193.70" width="5.76" height="1.5" fill="#ce9178"/><rect x="1459.12" y="193.70" width="0.96" height="1.5" fill="#ce9178"/><rect x="1461.04" y="193.70" width="2.88" height="1.5" fill="#ce9178"/><rect x="1464.88" y="193.70" width="7.68" height="1.5" fill="#ce9178"/><rect x="1443.76" y="195.60" width="10.56" height="1.5" fill="#569cd6"/><rect x="1456.24" y="195.60" width="13.44" height="1.5" fill="#ce9178"/><rect x="1443.76" y="197.50" width="10.56" height="1.5" fill="#569cd6"/><rect x="1445.68" y="199.40" width="7.68" height="1.5" fill="#569cd6"/><rect x="1455.28" y="199.40" width="3.84" height="1.5" fill="#569cd6"/><rect x="1445.68" y="201.30" width="6.72" height="1.5" fill="#569cd6"/><rect x="1447.60" y="203.20" width="15.36" height="1.5" fill="#569cd6"/><rect x="1449.52" y="205.10" width="5.76" height="1.5" fill="#569cd6"/><rect x="1451.44" y="207.00" width="3.84" height="1.5" fill="#569cd6"/><rect x="1457.20" y="207.00" width="35.52" height="1.5" fill="#ce9178"/><rect x="1443.76" y="208.90" width="8.64" height="1.5" fill="#569cd6"/><rect x="1445.68" y="210.80" width="5.76" height="1.5" fill="#ce9178"/><rect x="1447.60" y="212.70" width="10.56" height="1.5" fill="#569cd6"/><rect x="1460.08" y="212.70" width="7.68" height="1.5" fill="#ce9178"/><rect x="1468.72" y="212.70" width="6.72" height="1.5" fill="#ce9178"/><rect x="1476.40" y="212.70" width="11.52" height="1.5" fill="#ce9178"/><rect x="1447.60" y="214.60" width="6.72" height="1.5" fill="#569cd6"/><rect x="1449.52" y="216.50" width="15.36" height="1.5" fill="#569cd6"/><rect x="1451.44" y="218.40" width="5.76" height="1.5" fill="#569cd6"/><rect x="1453.36" y="220.30" width="3.84" height="1.5" fill="#569cd6"/><rect x="1459.12" y="220.30" width="29.76" height="1.5" fill="#ce9178"/><rect x="1445.68" y="222.20" width="5.76" height="1.5" fill="#ce9178"/><rect x="1447.60" y="224.10" width="10.56" height="1.5" fill="#569cd6"/><rect x="1460.08" y="224.10" width="2.88" height="1.5" fill="#ce9178"/><rect x="1463.92" y="224.10" width="6.72" height="1.5" fill="#ce9178"/><rect x="1447.60" y="226.00" width="6.72" height="1.5" fill="#569cd6"/><rect x="1449.52" y="227.90" width="15.36" height="1.5" fill="#569cd6"/><rect x="1451.44" y="229.80" width="5.76" height="1.5" fill="#569cd6"/><rect x="1453.36" y="231.70" width="3.84" height="1.5" fill="#569cd6"/><rect x="1459.12" y="231.70" width="26.88" height="1.5" fill="#ce9178"/><rect x="1439.92" y="233.60" width="15.36" height="1.5" fill="#569cd6"/><rect x="1441.84" y="235.50" width="2.88" height="1.5" fill="#569cd6"/><rect x="1443.76" y="237.40" width="6.72" height="1.5" fill="#569cd6"/><rect x="1452.40" y="237.40" width="2.88" height="1.5" fill="#ce9178"/><rect x="1456.24" y="237.40" width="0.96" height="1.5" fill="#ce9178"/><rect x="1458.16" y="237.40" width="7.68" height="1.5" fill="#ce9178"/><rect x="1466.80" y="237.40" width="1.92" height="1.5" fill="#ce9178"/><rect x="1469.68" y="237.40" width="1.92" height="1.5" fill="#ce9178"/><rect x="1443.76" y="239.30" width="10.56" height="1.5" fill="#569cd6"/><rect x="1456.24" y="239.30" width="14.40" height="1.5" fill="#ce9178"/><rect x="1443.76" y="241.20" width="9.60" height="1.5" fill="#569cd6"/><rect x="1445.68" y="243.10" width="0.96" height="1.5" fill="#d4d4d4"/><rect x="1447.60" y="243.10" width="3.84" height="1.5" fill="#569cd6"/><rect x="1453.36" y="243.10" width="1.92" height="1.5" fill="#ce9178"/><rect x="1447.60" y="245.00" width="1.92" height="1.5" fill="#569cd6"/><rect x="1451.44" y="245.00" width="3.84" height="1.5" fill="#ce9178"/><rect x="1447.60" y="246.90" width="7.68" height="1.5" fill="#569cd6"/><rect x="1457.20" y="246.90" width="3.84" height="1.5" fill="#569cd6"/><rect x="1447.60" y="248.80" width="5.76" height="1.5" fill="#569cd6"/><rect x="1449.52" y="250.70" width="3.84" height="1.5" fill="#569cd6"/><rect x="1455.28" y="250.70" width="6.72" height="1.5" fill="#ce9178"/><rect x="1443.76" y="252.60" width="8.64" height="1.5" fill="#569cd6"/><rect x="1445.68" y="254.50" width="5.76" height="1.5" fill="#ce9178"/><rect x="1447.60" y="256.40" width="10.56" height="1.5" fill="#569cd6"/><rect x="1460.08" y="256.40" width="9.60" height="1.5" fill="#ce9178"/><rect x="1470.64" y="256.40" width="7.68" height="1.5" fill="#ce9178"/><rect x="1447.60" y="258.30" width="6.72" height="1.5" fill="#569cd6"/><rect x="1449.52" y="260.20" width="15.36" height="1.5" fill="#569cd6"/><rect x="1451.44" y="262.10" width="5.76" height="1.5" fill="#569cd6"/><rect x="1453.36" y="264.00" width="3.84" height="1.5" fill="#569cd6"/><rect x="1459.12" y="264.00" width="29.76" height="1.5" fill="#ce9178"/><rect x="1445.68" y="265.90" width="5.76" height="1.5" fill="#ce9178"/><rect x="1447.60" y="267.80" width="10.56" height="1.5" fill="#569cd6"/><rect x="1460.08" y="267.80" width="2.88" height="1.5" fill="#ce9178"/><rect x="1463.92" y="267.80" width="4.80" height="1.5" fill="#ce9178"/><rect x="1447.60" y="269.70" width="6.72" height="1.5" fill="#569cd6"/><rect x="1449.52" y="271.60" width="15.36" height="1.5" fill="#569cd6"/><rect x="1451.44" y="273.50" width="5.76" height="1.5" fill="#569cd6"/><rect x="1453.36" y="275.40" width="3.84" height="1.5" fill="#569cd6"/><rect x="1459.12" y="275.40" width="26.88" height="1.5" fill="#ce9178"/><rect x="1441.84" y="277.30" width="2.88" height="1.5" fill="#569cd6"/><rect x="1443.76" y="279.20" width="6.72" height="1.5" fill="#569cd6"/><rect x="1452.40" y="279.20" width="5.76" height="1.5" fill="#ce9178"/><rect x="1459.12" y="279.20" width="0.96" height="1.5" fill="#ce9178"/><rect x="1461.04" y="279.20" width="7.68" height="1.5" fill="#ce9178"/><rect x="1443.76" y="281.10" width="10.56" height="1.5" fill="#569cd6"/><rect x="1456.24" y="281.10" width="14.40" height="1.5" fill="#ce9178"/><rect x="1443.76" y="283.00" width="9.60" height="1.5" fill="#569cd6"/><rect x="1445.68" y="284.90" width="0.96" height="1.5" fill="#d4d4d4"/><rect x="1447.60" y="284.90" width="3.84" height="1.5" fill="#569cd6"/><rect x="1453.36" y="284.90" width="1.92" height="1.5" fill="#ce9178"/><rect x="1447.60" y="286.80" width="1.92" height="1.5" fill="#569cd6"/><rect x="1451.44" y="286.80" width="3.84" height="1.5" fill="#ce9178"/><rect x="1447.60" y="288.70" width="7.68" height="1.5" fill="#569cd6"/><rect x="1457.20" y="288.70" width="3.84" height="1.5" fill="#569cd6"/><rect x="1447.60" y="290.60" width="5.76" height="1.5" fill="#569cd6"/><rect x="1449.52" y="292.50" width="3.84" height="1.5" fill="#569cd6"/><rect x="1455.28" y="292.50" width="6.72" height="1.5" fill="#ce9178"/><rect x="1443.76" y="294.40" width="10.56" height="1.5" fill="#569cd6"/><rect x="1445.68" y="296.30" width="7.68" height="1.5" fill="#569cd6"/><rect x="1455.28" y="296.30" width="3.84" height="1.5" fill="#569cd6"/><rect x="1445.68" y="298.20" width="6.72" height="1.5" fill="#569cd6"/><rect x="1447.60" y="300.10" width="15.36" height="1.5" fill="#569cd6"/><rect x="1449.52" y="302.00" width="5.76" height="1.5" fill="#569cd6"/><rect x="1451.44" y="303.90" width="3.84" height="1.5" fill="#569cd6"/><rect x="1457.20" y="303.90" width="35.52" height="1.5" fill="#ce9178"/><rect x="1443.76" y="305.80" width="8.64" height="1.5" fill="#569cd6"/><rect x="1445.68" y="307.70" width="5.76" height="1.5" fill="#ce9178"/><rect x="1447.60" y="309.60" width="10.56" height="1.5" fill="#569cd6"/><rect x="1460.08" y="309.60" width="9.60" height="1.5" fill="#ce9178"/><rect x="1470.64" y="309.60" width="7.68" height="1.5" fill="#ce9178"/><rect x="1447.60" y="311.50" width="6.72" height="1.5" fill="#569cd6"/><rect x="1449.52" y="313.40" width="15.36" height="1.5" fill="#569cd6"/><rect x="1451.44" y="315.30" width="5.76" height="1.5" fill="#569cd6"/><rect x="1453.36" y="317.20" width="3.84" height="1.5" fill="#569cd6"/><rect x="1459.12" y="317.20" width="29.76" height="1.5" fill="#ce9178"/><rect x="1445.68" y="319.10" width="5.76" height="1.5" fill="#ce9178"/><rect x="1447.60" y="321.00" width="10.56" height="1.5" fill="#569cd6"/><rect x="1460.08" y="321.00" width="2.88" height="1.5" fill="#ce9178"/><rect x="1463.92" y="321.00" width="4.80" height="1.5" fill="#ce9178"/><rect x="1447.60" y="322.90" width="6.72" height="1.5" fill="#569cd6"/><rect x="1449.52" y="324.80" width="15.36" height="1.5" fill="#569cd6"/><rect x="1451.44" y="326.70" width="5.76" height="1.5" fill="#569cd6"/><rect x="1453.36" y="328.60" width="3.84" height="1.5" fill="#569cd6"/><rect x="1459.12" y="328.60" width="26.88" height="1.5" fill="#ce9178"/><rect x="1441.84" y="330.50" width="5.76" height="1.5" fill="#569cd6"/><rect x="1443.76" y="332.40" width="6.72" height="1.5" fill="#569cd6"/><rect x="1452.40" y="332.40" width="5.76" height="1.5" fill="#ce9178"/><rect x="1459.12" y="332.40" width="0.96" height="1.5" fill="#ce9178"/><rect x="1461.04" y="332.40" width="7.68" height="1.5" fill="#ce9178"/><rect x="1443.76" y="334.30" width="10.56" height="1.5" fill="#569cd6"/><rect x="1456.24" y="334.30" width="17.28" height="1.5" fill="#ce9178"/><rect x="1443.76" y="336.20" width="9.60" height="1.5" fill="#569cd6"/><rect x="1445.68" y="338.10" width="0.96" height="1.5" fill="#d4d4d4"/><rect x="1447.60" y="338.10" width="3.84" height="1.5" fill="#569cd6"/><rect x="1453.36" y="338.10" width="1.92" height="1.5" fill="#ce9178"/><rect x="1447.60" y="340.00" width="1.92" height="1.5" fill="#569cd6"/><rect x="1451.44" y="340.00" width="3.84" height="1.5" fill="#ce9178"/><rect x="1447.60" y="341.90" width="7.68" height="1.5" fill="#569cd6"/><rect x="1457.20" y="341.90" width="3.84" height="1.5" fill="#569cd6"/><rect x="1447.60" y="343.80" width="5.76" height="1.5" fill="#569cd6"/><rect x="1449.52" y="345.70" width="3.84" height="1.5" fill="#569cd6"/><rect x="1455.28" y="345.70" width="6.72" height="1.5" fill="#ce9178"/><rect x="1443.76" y="347.60" width="8.64" height="1.5" fill="#569cd6"/><rect x="1445.68" y="349.50" width="5.76" height="1.5" fill="#ce9178"/><rect x="1447.60" y="351.40" width="10.56" height="1.5" fill="#569cd6"/><rect x="1460.08" y="351.40" width="9.60" height="1.5" fill="#ce9178"/><rect x="1470.64" y="351.40" width="7.68" height="1.5" fill="#ce9178"/><rect x="1447.60" y="353.30" width="6.72" height="1.5" fill="#569cd6"/><rect x="1449.52" y="355.20" width="15.36" height="1.5" fill="#569cd6"/><rect x="1451.44" y="357.10" width="5.76" height="1.5" fill="#569cd6"/><rect x="1453.36" y="359.00" width="3.84" height="1.5" fill="#569cd6"/><rect x="1459.12" y="359.00" width="29.76" height="1.5" fill="#ce9178"/><rect x="1445.68" y="360.90" width="5.76" height="1.5" fill="#ce9178"/><rect x="1447.60" y="362.80" width="10.56" height="1.5" fill="#569cd6"/><rect x="1460.08" y="362.80" width="2.88" height="1.5" fill="#ce9178"/><rect x="1463.92" y="362.80" width="4.80" height="1.5" fill="#ce9178"/><rect x="1447.60" y="364.70" width="6.72" height="1.5" fill="#569cd6"/><rect x="1449.52" y="366.60" width="15.36" height="1.5" fill="#569cd6"/><rect x="1451.44" y="368.50" width="5.76" height="1.5" fill="#569cd6"/><rect x="1453.36" y="370.40" width="3.84" height="1.5" fill="#569cd6"/><rect x="1459.12" y="370.40" width="26.88" height="1.5" fill="#ce9178"/><rect x="1439.92" y="372.30" width="0.96" height="1.5" fill="#6a9955"/><rect x="1441.84" y="372.30" width="6.72" height="1.5" fill="#6a9955"/><rect x="1449.52" y="372.30" width="3.84" height="1.5" fill="#6a9955"/><rect x="1439.92" y="374.20" width="8.64" height="1.5" fill="#569cd6"/><rect x="1441.84" y="376.10" width="2.88" height="1.5" fill="#569cd6"/><rect x="1443.76" y="378.00" width="6.72" height="1.5" fill="#569cd6"/><rect x="1452.40" y="378.00" width="2.88" height="1.5" fill="#ce9178"/><rect x="1456.24" y="378.00" width="2.88" height="1.5" fill="#ce9178"/><rect x="1460.08" y="378.00" width="7.68" height="1.5" fill="#ce9178"/><rect x="1443.76" y="379.90" width="10.56" height="1.5" fill="#569cd6"/><rect x="1456.24" y="379.90" width="9.60" height="1.5" fill="#ce9178"/><rect x="1443.76" y="381.80" width="9.60" height="1.5" fill="#569cd6"/><rect x="1445.68" y="383.70" width="0.96" height="1.5" fill="#d4d4d4"/><rect x="1447.60" y="383.70" width="3.84" height="1.5" fill="#569cd6"/><rect x="1453.36" y="383.70" width="6.72" height="1.5" fill="#ce9178"/><rect x="1447.60" y="385.60" width="1.92" height="1.5" fill="#569cd6"/><rect x="1451.44" y="385.60" width="4.80" height="1.5" fill="#ce9178"/><rect x="1447.60" y="387.50" width="10.56" height="1.5" fill="#569cd6"/><rect x="1460.08" y="387.50" width="5.76" height="1.5" fill="#ce9178"/><rect x="1466.80" y="387.50" width="1.92" height="1.5" fill="#ce9178"/><rect x="1469.68" y="387.50" width="6.72" height="1.5" fill="#ce9178"/><rect x="1477.36" y="387.50" width="5.76" height="1.5" fill="#ce9178"/><rect x="1447.60" y="389.40" width="7.68" height="1.5" fill="#569cd6"/><rect x="1457.20" y="389.40" width="4.80" height="1.5" fill="#569cd6"/><rect x="1447.60" y="391.30" width="5.76" height="1.5" fill="#569cd6"/><rect x="1449.52" y="393.20" width="3.84" height="1.5" fill="#569cd6"/><rect x="1455.28" y="393.20" width="6.72" height="1.5" fill="#ce9178"/><rect x="1449.52" y="395.10" width="3.84" height="1.5" fill="#569cd6"/><rect x="1455.28" y="395.10" width="2.88" height="1.5" fill="#b5cea8"/><rect x="1459.12" y="395.10" width="1.92" height="1.5" fill="#b5cea8"/><rect x="1443.76" y="397.00" width="8.64" height="1.5" fill="#569cd6"/><rect x="1445.68" y="398.90" width="5.76" height="1.5" fill="#ce9178"/><rect x="1447.60" y="400.80" width="10.56" height="1.5" fill="#569cd6"/><rect x="1460.08" y="400.80" width="9.60" height="1.5" fill="#ce9178"/><rect x="1470.64" y="400.80" width="7.68" height="1.5" fill="#ce9178"/><rect x="1447.60" y="402.70" width="6.72" height="1.5" fill="#569cd6"/><rect x="1449.52" y="404.60" width="15.36" height="1.5" fill="#569cd6"/><rect x="1451.44" y="406.50" width="5.76" height="1.5" fill="#569cd6"/><rect x="1453.36" y="408.40" width="3.84" height="1.5" fill="#569cd6"/><rect x="1459.12" y="408.40" width="4.80" height="1.5" fill="#ce9178"/><rect x="1453.36" y="410.30" width="4.80" height="1.5" fill="#569cd6"/><rect x="1455.28" y="412.20" width="3.84" height="1.5" fill="#569cd6"/><rect x="1461.04" y="412.20" width="28.80" height="1.5" fill="#ce9178"/><rect x="1441.84" y="414.10" width="3.84" height="1.5" fill="#569cd6"/><rect x="1443.76" y="416.00" width="6.72" height="1.5" fill="#569cd6"/><rect x="1452.40" y="416.00" width="5.76" height="1.5" fill="#ce9178"/><rect x="1459.12" y="416.00" width="0.96" height="1.5" fill="#ce9178"/><rect x="1461.04" y="416.00" width="2.88" height="1.5" fill="#ce9178"/><rect x="1464.88" y="416.00" width="6.72" height="1.5" fill="#ce9178"/><rect x="1443.76" y="417.90" width="10.56" height="1.5" fill="#569cd6"/><rect x="1456.24" y="417.90" width="12.48" height="1.5" fill="#ce9178"/><rect x="1443.76" y="419.80" width="10.56" height="1.5" fill="#569cd6"/><rect x="1445.68" y="421.70" width="7.68" height="1.5" fill="#569cd6"/><rect x="1455.28" y="421.70" width="3.84" height="1.5" fill="#569cd6"/><rect x="1445.68" y="423.60" width="6.72" height="1.5" fill="#569cd6"/><rect x="1447.60" y="425.50" width="15.36" height="1.5" fill="#569cd6"/><rect x="1449.52" y="427.40" width="5.76" height="1.5" fill="#569cd6"/><rect x="1451.44" y="429.30" width="3.84" height="1.5" fill="#569cd6"/><rect x="1457.20" y="429.30" width="34.56" height="1.5" fill="#ce9178"/><rect x="1443.76" y="431.20" width="8.64" height="1.5" fill="#569cd6"/><rect x="1445.68" y="433.10" width="5.76" height="1.5" fill="#ce9178"/><rect x="1447.60" y="435.00" width="10.56" height="1.5" fill="#569cd6"/><rect x="1460.08" y="435.00" width="7.68" height="1.5" fill="#ce9178"/><rect x="1468.72" y="435.00" width="6.72" height="1.5" fill="#ce9178"/><rect x="1476.40" y="435.00" width="11.52" height="1.5" fill="#ce9178"/><rect x="1447.60" y="436.90" width="6.72" height="1.5" fill="#569cd6"/><rect x="1449.52" y="438.80" width="15.36" height="1.5" fill="#569cd6"/><rect x="1451.44" y="440.70" width="5.76" height="1.5" fill="#569cd6"/><rect x="1453.36" y="442.60" width="3.84" height="1.5" fill="#569cd6"/><rect x="1459.12" y="442.60" width="28.80" height="1.5" fill="#ce9178"/><rect x="1445.68" y="444.50" width="5.76" height="1.5" fill="#ce9178"/><rect x="1447.60" y="446.40" width="10.56" height="1.5" fill="#569cd6"/><rect x="1460.08" y="446.40" width="2.88" height="1.5" fill="#ce9178"/><rect x="1463.92" y="446.40" width="6.72" height="1.5" fill="#ce9178"/><rect x="1447.60" y="448.30" width="6.72" height="1.5" fill="#569cd6"/><rect x="1449.52" y="450.20" width="15.36" height="1.5" fill="#569cd6"/><rect x="1451.44" y="452.10" width="5.76" height="1.5" fill="#569cd6"/><rect x="1453.36" y="454.00" width="3.84" height="1.5" fill="#569cd6"/><rect x="1459.12" y="454.00" width="26.88" height="1.5" fill="#ce9178"/><rect x="1439.92" y="455.90" width="13.44" height="1.5" fill="#569cd6"/><rect x="1441.84" y="457.80" width="2.88" height="1.5" fill="#569cd6"/><rect x="1443.76" y="459.70" width="6.72" height="1.5" fill="#569cd6"/><rect x="1452.40" y="459.70" width="2.88" height="1.5" fill="#ce9178"/><rect x="1456.24" y="459.70" width="0.96" height="1.5" fill="#ce9178"/><rect x="1458.16" y="459.70" width="6.72" height="1.5" fill="#ce9178"/><rect x="1465.84" y="459.70" width="1.92" height="1.5" fill="#ce9178"/><rect x="1468.72" y="459.70" width="1.92" height="1.5" fill="#ce9178"/><rect x="1443.76" y="461.60" width="10.56" height="1.5" fill="#569cd6"/><rect x="1456.24" y="461.60" width="13.44" height="1.5" fill="#ce9178"/><rect x="1443.76" y="463.50" width="9.60" height="1.5" fill="#569cd6"/><rect x="1445.68" y="465.40" width="0.96" height="1.5" fill="#d4d4d4"/><rect x="1447.60" y="465.40" width="3.84" height="1.5" fill="#569cd6"/><rect x="1453.36" y="465.40" width="1.92" height="1.5" fill="#ce9178"/><rect x="1447.60" y="467.30" width="1.92" height="1.5" fill="#569cd6"/><rect x="1451.44" y="467.30" width="3.84" height="1.5" fill="#ce9178"/><rect x="1447.60" y="469.20" width="7.68" height="1.5" fill="#569cd6"/><rect x="1457.20" y="469.20" width="3.84" height="1.5" fill="#569cd6"/><rect x="1447.60" y="471.10" width="5.76" height="1.5" fill="#569cd6"/><rect x="1449.52" y="473.00" width="3.84" height="1.5" fill="#569cd6"/><rect x="1455.28" y="473.00" width="6.72" height="1.5" fill="#ce9178"/><rect x="1443.76" y="474.90" width="8.64" height="1.5" fill="#569cd6"/><rect x="1445.68" y="476.80" width="5.76" height="1.5" fill="#ce9178"/><rect x="1447.60" y="478.70" width="10.56" height="1.5" fill="#569cd6"/><rect x="1460.08" y="478.70" width="9.60" height="1.5" fill="#ce9178"/><rect x="1470.64" y="478.70" width="7.68" height="1.5" fill="#ce9178"/><rect x="1447.60" y="480.60" width="6.72" height="1.5" fill="#569cd6"/><rect x="1449.52" y="482.50" width="15.36" height="1.5" fill="#569cd6"/><rect x="1451.44" y="484.40" width="5.76" height="1.5" fill="#569cd6"/><rect x="1453.36" y="486.30" width="3.84" height="1.5" fill="#569cd6"/><rect x="1459.12" y="486.30" width="28.80" height="1.5" fill="#ce9178"/><rect x="1445.68" y="488.20" width="5.76" height="1.5" fill="#ce9178"/><rect x="1447.60" y="490.10" width="10.56" height="1.5" fill="#569cd6"/><rect x="1460.08" y="490.10" width="2.88" height="1.5" fill="#ce9178"/><rect x="1463.92" y="490.10" width="4.80" height="1.5" fill="#ce9178"/><rect x="1447.60" y="492.00" width="6.72" height="1.5" fill="#569cd6"/><rect x="1449.52" y="493.90" width="15.36" height="1.5" fill="#569cd6"/><rect x="1451.44" y="495.80" width="5.76" height="1.5" fill="#569cd6"/><rect x="1453.36" y="497.70" width="3.84" height="1.5" fill="#569cd6"/><rect x="1459.12" y="497.70" width="26.88" height="1.5" fill="#ce9178"/><rect x="1441.84" y="499.60" width="2.88" height="1.5" fill="#569cd6"/><rect x="1443.76" y="501.50" width="6.72" height="1.5" fill="#569cd6"/><rect x="1452.40" y="501.50" width="5.76" height="1.5" fill="#ce9178"/><rect x="1459.12" y="501.50" width="0.96" height="1.5" fill="#ce9178"/><rect x="1461.04" y="501.50" width="6.72" height="1.5" fill="#ce9178"/><rect x="1443.76" y="503.40" width="10.56" height="1.5" fill="#569cd6"/><rect x="1456.24" y="503.40" width="13.44" height="1.5" fill="#ce9178"/><rect x="1443.76" y="505.30" width="9.60" height="1.5" fill="#569cd6"/><rect x="1445.68" y="507.20" width="0.96" height="1.5" fill="#d4d4d4"/><rect x="1447.60" y="507.20" width="3.84" height="1.5" fill="#569cd6"/><rect x="1453.36" y="507.20" width="1.92" height="1.5" fill="#ce9178"/><rect x="1447.60" y="509.10" width="1.92" height="1.5" fill="#569cd6"/><rect x="1451.44" y="509.10" width="3.84" height="1.5" fill="#ce9178"/><rect x="1447.60" y="511.00" width="7.68" height="1.5" fill="#569cd6"/><rect x="1457.20" y="511.00" width="3.84" height="1.5" fill="#569cd6"/><rect x="1447.60" y="512.90" width="5.76" height="1.5" fill="#569cd6"/><rect x="1449.52" y="514.80" width="3.84" height="1.5" fill="#569cd6"/><rect x="1455.28" y="514.80" width="6.72" height="1.5" fill="#ce9178"/><rect x="1443.76" y="516.70" width="10.56" height="1.5" fill="#569cd6"/><rect x="1445.68" y="518.60" width="7.68" height="1.5" fill="#569cd6"/><rect x="1455.28" y="518.60" width="3.84" height="1.5" fill="#569cd6"/><rect x="1445.68" y="520.50" width="6.72" height="1.5" fill="#569cd6"/><rect x="1447.60" y="522.40" width="15.36" height="1.5" fill="#569cd6"/><rect x="1449.52" y="524.30" width="5.76" height="1.5" fill="#569cd6"/><rect x="1451.44" y="526.20" width="3.84" height="1.5" fill="#569cd6"/><rect x="1457.20" y="526.20" width="34.56" height="1.5" fill="#ce9178"/><rect x="1443.76" y="528.10" width="8.64" height="1.5" fill="#569cd6"/><rect x="1445.68" y="530.00" width="5.76" height="1.5" fill="#ce9178"/><rect x="1447.60" y="531.90" width="10.56" height="1.5" fill="#569cd6"/><rect x="1460.08" y="531.90" width="9.60" height="1.5" fill="#ce9178"/><rect x="1470.64" y="531.90" width="7.68" height="1.5" fill="#ce9178"/><rect x="1447.60" y="533.80" width="6.72" height="1.5" fill="#569cd6"/><rect x="1449.52" y="535.70" width="15.36" height="1.5" fill="#569cd6"/><rect x="1451.44" y="537.60" width="5.76" height="1.5" fill="#569cd6"/><rect x="1453.36" y="539.50" width="3.84" height="1.5" fill="#569cd6"/><rect x="1459.12" y="539.50" width="28.80" height="1.5" fill="#ce9178"/><rect x="1445.68" y="541.40" width="5.76" height="1.5" fill="#ce9178"/><rect x="1447.60" y="543.30" width="10.56" height="1.5" fill="#569cd6"/><rect x="1460.08" y="543.30" width="2.88" height="1.5" fill="#ce9178"/><rect x="1463.92" y="543.30" width="4.80" height="1.5" fill="#ce9178"/><rect x="1447.60" y="545.20" width="6.72" height="1.5" fill="#569cd6"/><rect x="1449.52" y="547.10" width="15.36" height="1.5" fill="#569cd6"/><rect x="1451.44" y="549.00" width="5.76" height="1.5" fill="#569cd6"/><rect x="1453.36" y="550.90" width="3.84" height="1.5" fill="#569cd6"/><rect x="1459.12" y="550.90" width="26.88" height="1.5" fill="#ce9178"/><rect x="1441.84" y="552.80" width="5.76" height="1.5" fill="#569cd6"/><rect x="1443.76" y="554.70" width="6.72" height="1.5" fill="#569cd6"/><rect x="1452.40" y="554.70" width="5.76" height="1.5" fill="#ce9178"/><rect x="1459.12" y="554.70" width="0.96" height="1.5" fill="#ce9178"/><rect x="1461.04" y="554.70" width="6.72" height="1.5" fill="#ce9178"/><rect x="1443.76" y="556.60" width="10.56" height="1.5" fill="#569cd6"/><rect x="1456.24" y="556.60" width="16.32" height="1.5" fill="#ce9178"/><rect x="1443.76" y="558.50" width="9.60" height="1.5" fill="#569cd6"/><rect x="1445.68" y="560.40" width="0.96" height="1.5" fill="#d4d4d4"/><rect x="1447.60" y="560.40" width="3.84" height="1.5" fill="#569cd6"/><rect x="1453.36" y="560.40" width="1.92" height="1.5" fill="#ce9178"/><rect x="1447.60" y="562.30" width="1.92" height="1.5" fill="#569cd6"/><rect x="1451.44" y="562.30" width="3.84" height="1.5" fill="#ce9178"/><rect x="1447.60" y="564.20" width="7.68" height="1.5" fill="#569cd6"/><rect x="1457.20" y="564.20" width="3.84" height="1.5" fill="#569cd6"/><rect x="1447.60" y="566.10" width="5.76" height="1.5" fill="#569cd6"/><rect x="1449.52" y="568.00" width="3.84" height="1.5" fill="#569cd6"/><rect x="1455.28" y="568.00" width="6.72" height="1.5" fill="#ce9178"/><rect x="1443.76" y="569.90" width="8.64" height="1.5" fill="#569cd6"/><rect x="1445.68" y="571.80" width="5.76" height="1.5" fill="#ce9178"/><rect x="1447.60" y="573.70" width="10.56" height="1.5" fill="#569cd6"/><rect x="1460.08" y="573.70" width="9.60" height="1.5" fill="#ce9178"/><rect x="1470.64" y="573.70" width="7.68" height="1.5" fill="#ce9178"/><rect x="1447.60" y="575.60" width="6.72" height="1.5" fill="#569cd6"/><rect x="1449.52" y="577.50" width="15.36" height="1.5" fill="#569cd6"/><rect x="1451.44" y="579.40" width="5.76" height="1.5" fill="#569cd6"/><rect x="1453.36" y="581.30" width="3.84" height="1.5" fill="#569cd6"/><rect x="1459.12" y="581.30" width="28.80" height="1.5" fill="#ce9178"/><rect x="1445.68" y="583.20" width="5.76" height="1.5" fill="#ce9178"/><rect x="1447.60" y="585.10" width="10.56" height="1.5" fill="#569cd6"/><rect x="1460.08" y="585.10" width="2.88" height="1.5" fill="#ce9178"/><rect x="1463.92" y="585.10" width="4.80" height="1.5" fill="#ce9178"/><rect x="1447.60" y="587.00" width="6.72" height="1.5" fill="#569cd6"/><rect x="1449.52" y="588.90" width="15.36" height="1.5" fill="#569cd6"/><rect x="1451.44" y="590.80" width="5.76" height="1.5" fill="#569cd6"/><rect x="1453.36" y="592.70" width="3.84" height="1.5" fill="#569cd6"/><rect x="1459.12" y="592.70" width="26.88" height="1.5" fill="#ce9178"/><rect x="1439.92" y="594.60" width="0.96" height="1.5" fill="#6a9955"/><rect x="1441.84" y="594.60" width="4.80" height="1.5" fill="#6a9955"/><rect x="1447.60" y="594.60" width="3.84" height="1.5" fill="#6a9955"/><rect x="1439.92" y="596.50" width="6.72" height="1.5" fill="#569cd6"/><rect x="1441.84" y="598.40" width="2.88" height="1.5" fill="#569cd6"/><rect x="1443.76" y="600.30" width="6.72" height="1.5" fill="#569cd6"/><rect x="1452.40" y="600.30" width="2.88" height="1.5" fill="#ce9178"/><rect x="1456.24" y="600.30" width="2.88" height="1.5" fill="#ce9178"/><rect x="1460.08" y="600.30" width="5.76" height="1.5" fill="#ce9178"/><rect x="1443.76" y="602.20" width="10.56" height="1.5" fill="#569cd6"/><rect x="1456.24" y="602.20" width="7.68" height="1.5" fill="#ce9178"/><rect x="1443.76" y="604.10" width="9.60" height="1.5" fill="#569cd6"/><rect x="1445.68" y="606.00" width="0.96" height="1.5" fill="#d4d4d4"/><rect x="1447.60" y="606.00" width="3.84" height="1.5" fill="#569cd6"/><rect x="1453.36" y="606.00" width="6.72" height="1.5" fill="#ce9178"/><rect x="1447.60" y="607.90" width="1.92" height="1.5" fill="#569cd6"/><rect x="1451.44" y="607.90" width="4.80" height="1.5" fill="#ce9178"/><rect x="1447.60" y="609.80" width="10.56" height="1.5" fill="#569cd6"/><rect x="1460.08" y="609.80" width="5.76" height="1.5" fill="#ce9178"/><rect x="1466.80" y="609.80" width="1.92" height="1.5" fill="#ce9178"/><rect x="1469.68" y="609.80" width="6.72" height="1.5" fill="#ce9178"/><rect x="1477.36" y="609.80" width="5.76" height="1.5" fill="#ce9178"/><rect x="1447.60" y="611.70" width="7.68" height="1.5" fill="#569cd6"/><rect x="1457.20" y="611.70" width="4.80" height="1.5" fill="#569cd6"/><rect x="1447.60" y="613.60" width="5.76" height="1.5" fill="#569cd6"/><rect x="1449.52" y="615.50" width="3.84" height="1.5" fill="#569cd6"/><rect x="1455.28" y="615.50" width="6.72" height="1.5" fill="#ce9178"/><rect x="1449.52" y="617.40" width="3.84" height="1.5" fill="#569cd6"/><rect x="1455.28" y="617.40" width="2.88" height="1.5" fill="#b5cea8"/><rect x="1459.12" y="617.40" width="1.92" height="1.5" fill="#b5cea8"/><rect x="1443.76" y="619.30" width="8.64" height="1.5" fill="#569cd6"/><rect x="1445.68" y="621.20" width="5.76" height="1.5" fill="#ce9178"/><rect x="1447.60" y="623.10" width="10.56" height="1.5" fill="#569cd6"/><rect x="1460.08" y="623.10" width="9.60" height="1.5" fill="#ce9178"/><rect x="1470.64" y="623.10" width="7.68" height="1.5" fill="#ce9178"/><rect x="1447.60" y="625.00" width="6.72" height="1.5" fill="#569cd6"/><rect x="1449.52" y="626.90" width="15.36" height="1.5" fill="#569cd6"/><rect x="1451.44" y="628.80" width="5.76" height="1.5" fill="#569cd6"/><rect x="1453.36" y="630.70" width="3.84" height="1.5" fill="#569cd6"/><rect x="1459.12" y="630.70" width="4.80" height="1.5" fill="#ce9178"/><rect x="1453.36" y="632.60" width="4.80" height="1.5" fill="#569cd6"/><rect x="1455.28" y="634.50" width="3.84" height="1.5" fill="#569cd6"/><rect x="1461.04" y="634.50" width="26.88" height="1.5" fill="#ce9178"/><rect x="1441.84" y="636.40" width="3.84" height="1.5" fill="#569cd6"/><rect x="1443.76" y="638.30" width="6.72" height="1.5" fill="#569cd6"/><rect x="1452.40" y="638.30" width="5.76" height="1.5" fill="#ce9178"/><rect x="1459.12" y="638.30" width="0.96" height="1.5" fill="#ce9178"/><rect x="1461.04" y="638.30" width="2.88" height="1.5" fill="#ce9178"/><rect x="1464.88" y="638.30" width="4.80" height="1.5" fill="#ce9178"/><rect x="1443.76" y="640.20" width="10.56" height="1.5" fill="#569cd6"/><rect x="1456.24" y="640.20" width="10.56" height="1.5" fill="#ce9178"/><rect x="1443.76" y="642.10" width="10.56" height="1.5" fill="#569cd6"/><rect x="1445.68" y="644.00" width="7.68" height="1.5" fill="#569cd6"/><rect x="1455.28" y="644.00" width="3.84" height="1.5" fill="#569cd6"/><rect x="1445.68" y="645.90" width="6.72" height="1.5" fill="#569cd6"/><rect x="1447.60" y="647.80" width="15.36" height="1.5" fill="#569cd6"/><rect x="1449.52" y="649.70" width="5.76" height="1.5" fill="#569cd6"/><rect x="1451.44" y="651.60" width="3.84" height="1.5" fill="#569cd6"/><rect x="1457.20" y="651.60" width="32.64" height="1.5" fill="#ce9178"/><rect x="1443.76" y="653.50" width="8.64" height="1.5" fill="#569cd6"/><rect x="1445.68" y="655.40" width="5.76" height="1.5" fill="#ce9178"/><rect x="1447.60" y="657.30" width="10.56" height="1.5" fill="#569cd6"/><rect x="1460.08" y="657.30" width="7.68" height="1.5" fill="#ce9178"/><rect x="1468.72" y="657.30" width="6.72" height="1.5" fill="#ce9178"/><rect x="1476.40" y="657.30" width="11.52" height="1.5" fill="#ce9178"/><rect x="1447.60" y="659.20" width="6.72" height="1.5" fill="#569cd6"/><rect x="1449.52" y="661.10" width="15.36" height="1.5" fill="#569cd6"/><rect x="1451.44" y="663.00" width="5.76" height="1.5" fill="#569cd6"/><rect x="1453.36" y="664.90" width="3.84" height="1.5" fill="#569cd6"/><rect x="1459.12" y="664.90" width="26.88" height="1.5" fill="#ce9178"/><rect x="1445.68" y="666.80" width="5.76" height="1.5" fill="#ce9178"/><rect x="1447.60" y="668.70" width="10.56" height="1.5" fill="#569cd6"/><rect x="1460.08" y="668.70" width="2.88" height="1.5" fill="#ce9178"/><rect x="1463.92" y="668.70" width="6.72" height="1.5" fill="#ce9178"/><rect x="1447.60" y="670.60" width="6.72" height="1.5" fill="#569cd6"/><rect x="1449.52" y="672.50" width="15.36" height="1.5" fill="#569cd6"/><rect x="1451.44" y="674.40" width="5.76" height="1.5" fill="#569cd6"/><rect x="1453.36" y="676.30" width="3.84" height="1.5" fill="#569cd6"/><rect x="1459.12" y="676.30" width="26.88" height="1.5" fill="#ce9178"/><rect x="1439.92" y="678.20" width="11.52" height="1.5" fill="#569cd6"/><rect x="1441.84" y="680.10" width="2.88" height="1.5" fill="#569cd6"/><rect x="1443.76" y="682.00" width="6.72" height="1.5" fill="#569cd6"/><rect x="1452.40" y="682.00" width="2.88" height="1.5" fill="#ce9178"/><rect x="1456.24" y="682.00" width="0.96" height="1.5" fill="#ce9178"/><rect x="1458.16" y="682.00" width="4.80" height="1.5" fill="#ce9178"/><rect x="1463.92" y="682.00" width="1.92" height="1.5" fill="#ce9178"/><rect x="1466.80" y="682.00" width="1.92" height="1.5" fill="#ce9178"/><rect x="1443.76" y="683.90" width="10.56" height="1.5" fill="#569cd6"/><rect x="1456.24" y="683.90" width="11.52" height="1.5" fill="#ce9178"/><rect x="1443.76" y="685.80" width="9.60" height="1.5" fill="#569cd6"/><rect x="1445.68" y="687.70" width="0.96" height="1.5" fill="#d4d4d4"/><rect x="1447.60" y="687.70" width="3.84" height="1.5" fill="#569cd6"/><rect x="1453.36" y="687.70" width="1.92" height="1.5" fill="#ce9178"/><rect x="1447.60" y="689.60" width="1.92" height="1.5" fill="#569cd6"/><rect x="1451.44" y="689.60" width="3.84" height="1.5" fill="#ce9178"/><rect x="1447.60" y="691.50" width="7.68" height="1.5" fill="#569cd6"/><rect x="1457.20" y="691.50" width="3.84" height="1.5" fill="#569cd6"/><rect x="1447.60" y="693.40" width="5.76" height="1.5" fill="#569cd6"/><rect x="1449.52" y="695.30" width="3.84" height="1.5" fill="#569cd6"/><rect x="1455.28" y="695.30" width="6.72" height="1.5" fill="#ce9178"/><rect x="1443.76" y="697.20" width="8.64" height="1.5" fill="#569cd6"/><rect x="1445.68" y="699.10" width="5.76" height="1.5" fill="#ce9178"/><rect x="1447.60" y="701.00" width="10.56" height="1.5" fill="#569cd6"/><rect x="1460.08" y="701.00" width="9.60" height="1.5" fill="#ce9178"/><rect x="1470.64" y="701.00" width="7.68" height="1.5" fill="#ce9178"/><rect x="1447.60" y="702.90" width="6.72" height="1.5" fill="#569cd6"/><rect x="1449.52" y="704.80" width="15.36" height="1.5" fill="#569cd6"/><rect x="1451.44" y="706.70" width="5.76" height="1.5" fill="#569cd6"/><rect x="1453.36" y="708.60" width="3.84" height="1.5" fill="#569cd6"/><rect x="1459.12" y="708.60" width="26.88" height="1.5" fill="#ce9178"/><rect x="1445.68" y="710.50" width="5.76" height="1.5" fill="#ce9178"/><rect x="1447.60" y="712.40" width="10.56" height="1.5" fill="#569cd6"/><rect x="1460.08" y="712.40" width="2.88" height="1.5" fill="#ce9178"/><rect x="1463.92" y="712.40" width="4.80" height="1.5" fill="#ce9178"/><rect x="1447.60" y="714.30" width="6.72" height="1.5" fill="#569cd6"/><rect x="1449.52" y="716.20" width="15.36" height="1.5" fill="#569cd6"/><rect x="1451.44" y="718.10" width="5.76" height="1.5" fill="#569cd6"/><rect x="1453.36" y="720.00" width="3.84" height="1.5" fill="#569cd6"/><rect x="1459.12" y="720.00" width="26.88" height="1.5" fill="#ce9178"/><rect x="1441.84" y="721.90" width="2.88" height="1.5" fill="#569cd6"/><rect x="1443.76" y="723.80" width="6.72" height="1.5" fill="#569cd6"/><rect x="1452.40" y="723.80" width="5.76" height="1.5" fill="#ce9178"/><rect x="1459.12" y="723.80" width="0.96" height="1.5" fill="#ce9178"/><rect x="1461.04" y="723.80" width="4.80" height="1.5" fill="#ce9178"/><rect x="1443.76" y="725.70" width="10.56" height="1.5" fill="#569cd6"/><rect x="1456.24" y="725.70" width="11.52" height="1.5" fill="#ce9178"/><rect x="1443.76" y="727.60" width="9.60" height="1.5" fill="#569cd6"/><rect x="1445.68" y="729.50" width="0.96" height="1.5" fill="#d4d4d4"/><rect x="1447.60" y="729.50" width="3.84" height="1.5" fill="#569cd6"/><rect x="1453.36" y="729.50" width="1.92" height="1.5" fill="#ce9178"/><rect x="1447.60" y="731.40" width="1.92" height="1.5" fill="#569cd6"/><rect x="1451.44" y="731.40" width="3.84" height="1.5" fill="#ce9178"/><rect x="1447.60" y="733.30" width="7.68" height="1.5" fill="#569cd6"/><rect x="1457.20" y="733.30" width="3.84" height="1.5" fill="#569cd6"/><rect x="1447.60" y="735.20" width="5.76" height="1.5" fill="#569cd6"/><rect x="1449.52" y="737.10" width="3.84" height="1.5" fill="#569cd6"/><rect x="1455.28" y="737.10" width="6.72" height="1.5" fill="#ce9178"/><rect x="1443.76" y="739.00" width="10.56" height="1.5" fill="#569cd6"/><rect x="1445.68" y="740.90" width="7.68" height="1.5" fill="#569cd6"/><rect x="1455.28" y="740.90" width="3.84" height="1.5" fill="#569cd6"/><rect x="1445.68" y="742.80" width="6.72" height="1.5" fill="#569cd6"/><rect x="1447.60" y="744.70" width="15.36" height="1.5" fill="#569cd6"/><rect x="1449.52" y="746.60" width="5.76" height="1.5" fill="#569cd6"/><rect x="1451.44" y="748.50" width="3.84" height="1.5" fill="#569cd6"/><rect x="1457.20" y="748.50" width="32.64" height="1.5" fill="#ce9178"/><rect x="1443.76" y="750.40" width="8.64" height="1.5" fill="#569cd6"/><rect x="1445.68" y="752.30" width="5.76" height="1.5" fill="#ce9178"/><rect x="1447.60" y="754.20" width="10.56" height="1.5" fill="#569cd6"/><rect x="1460.08" y="754.20" width="9.60" height="1.5" fill="#ce9178"/><rect x="1470.64" y="754.20" width="7.68" height="1.5" fill="#ce9178"/><rect x="1447.60" y="756.10" width="6.72" height="1.5" fill="#569cd6"/><rect x="1449.52" y="758.00" width="15.36" height="1.5" fill="#569cd6"/><rect x="1451.44" y="759.90" width="5.76" height="1.5" fill="#569cd6"/><rect x="1453.36" y="761.80" width="3.84" height="1.5" fill="#569cd6"/><rect x="1459.12" y="761.80" width="26.88" height="1.5" fill="#ce9178"/><rect x="1445.68" y="763.70" width="5.76" height="1.5" fill="#ce9178"/><rect x="1447.60" y="765.60" width="10.56" height="1.5" fill="#569cd6"/><rect x="1460.08" y="765.60" width="2.88" height="1.5" fill="#ce9178"/><rect x="1463.92" y="765.60" width="4.80" height="1.5" fill="#ce9178"/><rect x="1447.60" y="767.50" width="6.72" height="1.5" fill="#569cd6"/><rect x="1449.52" y="769.40" width="15.36" height="1.5" fill="#569cd6"/><rect x="1451.44" y="771.30" width="5.76" height="1.5" fill="#569cd6"/><rect x="1453.36" y="773.20" width="3.84" height="1.5" fill="#569cd6"/><rect x="1459.12" y="773.20" width="26.88" height="1.5" fill="#ce9178"/><rect x="1441.84" y="775.10" width="5.76" height="1.5" fill="#569cd6"/><rect x="1443.76" y="777.00" width="6.72" height="1.5" fill="#569cd6"/><rect x="1452.40" y="777.00" width="5.76" height="1.5" fill="#ce9178"/><rect x="1459.12" y="777.00" width="0.96" height="1.5" fill="#ce9178"/><rect x="1461.04" y="777.00" width="4.80" height="1.5" fill="#ce9178"/><rect x="1443.76" y="778.90" width="10.56" height="1.5" fill="#569cd6"/><rect x="1456.24" y="778.90" width="14.40" height="1.5" fill="#ce9178"/><rect x="1443.76" y="780.80" width="9.60" height="1.5" fill="#569cd6"/><rect x="1445.68" y="782.70" width="0.96" height="1.5" fill="#d4d4d4"/><rect x="1447.60" y="782.70" width="3.84" height="1.5" fill="#569cd6"/><rect x="1453.36" y="782.70" width="1.92" height="1.5" fill="#ce9178"/><rect x="1447.60" y="784.60" width="1.92" height="1.5" fill="#569cd6"/><rect x="1451.44" y="784.60" width="3.84" height="1.5" fill="#ce9178"/><rect x="1447.60" y="786.50" width="7.68" height="1.5" fill="#569cd6"/><rect x="1457.20" y="786.50" width="3.84" height="1.5" fill="#569cd6"/><rect x="1447.60" y="788.40" width="5.76" height="1.5" fill="#569cd6"/><rect x="1449.52" y="790.30" width="3.84" height="1.5" fill="#569cd6"/><rect x="1455.28" y="790.30" width="6.72" height="1.5" fill="#ce9178"/><rect x="1443.76" y="792.20" width="8.64" height="1.5" fill="#569cd6"/><rect x="1445.68" y="794.10" width="5.76" height="1.5" fill="#ce9178"/><rect x="1447.60" y="796.00" width="10.56" height="1.5" fill="#569cd6"/><rect x="1460.08" y="796.00" width="9.60" height="1.5" fill="#ce9178"/><rect x="1470.64" y="796.00" width="7.68" height="1.5" fill="#ce9178"/><rect x="1447.60" y="797.90" width="6.72" height="1.5" fill="#569cd6"/><rect x="1449.52" y="799.80" width="15.36" height="1.5" fill="#569cd6"/><rect x="1451.44" y="801.70" width="5.76" height="1.5" fill="#569cd6"/><rect x="1453.36" y="803.60" width="3.84" height="1.5" fill="#569cd6"/><rect x="1459.12" y="803.60" width="26.88" height="1.5" fill="#ce9178"/><rect x="1445.68" y="805.50" width="5.76" height="1.5" fill="#ce9178"/><rect x="1447.60" y="807.40" width="10.56" height="1.5" fill="#569cd6"/><rect x="1460.08" y="807.40" width="2.88" height="1.5" fill="#ce9178"/><rect x="1463.92" y="807.40" width="4.80" height="1.5" fill="#ce9178"/><rect x="1447.60" y="809.30" width="6.72" height="1.5" fill="#569cd6"/><rect x="1449.52" y="811.20" width="15.36" height="1.5" fill="#569cd6"/><rect x="1451.44" y="813.10" width="5.76" height="1.5" fill="#569cd6"/><rect x="1453.36" y="815.00" width="3.84" height="1.5" fill="#569cd6"/><rect x="1459.12" y="815.00" width="26.88" height="1.5" fill="#ce9178"/><rect x="1438.00" y="816.90" width="9.60" height="1.5" fill="#569cd6"/><rect x="1439.92" y="818.80" width="6.72" height="1.5" fill="#569cd6"/><rect x="1441.84" y="820.70" width="7.68" height="1.5" fill="#569cd6"/><rect x="1443.76" y="822.60" width="3.84" height="1.5" fill="#569cd6"/><rect x="1449.52" y="822.60" width="5.76" height="1.5" fill="#ce9178"/><rect x="1443.76" y="824.50" width="9.60" height="1.5" fill="#569cd6"/><rect x="1445.68" y="826.40" width="1.92" height="1.5" fill="#569cd6"/><rect x="1447.60" y="828.30" width="3.84" height="1.5" fill="#569cd6"/><rect x="1453.36" y="828.30" width="6.72" height="1.5" fill="#ce9178"/><rect x="1447.60" y="830.20" width="10.56" height="1.5" fill="#569cd6"/><rect x="1460.08" y="830.20" width="1.92" height="1.5" fill="#ce9178"/><rect x="1462.96" y="830.20" width="1.92" height="1.5" fill="#ce9178"/><rect x="1465.84" y="830.20" width="2.88" height="1.5" fill="#ce9178"/><rect x="1469.68" y="830.20" width="3.84" height="1.5" fill="#ce9178"/><rect x="1445.68" y="832.10" width="3.84" height="1.5" fill="#569cd6"/><rect x="1447.60" y="834.00" width="3.84" height="1.5" fill="#569cd6"/><rect x="1453.36" y="834.00" width="5.76" height="1.5" fill="#ce9178"/><rect x="1447.60" y="835.90" width="10.56" height="1.5" fill="#569cd6"/><rect x="1460.08" y="835.90" width="3.84" height="1.5" fill="#ce9178"/><rect x="1464.88" y="835.90" width="1.92" height="1.5" fill="#ce9178"/><rect x="1467.76" y="835.90" width="2.88" height="1.5" fill="#ce9178"/><rect x="1471.60" y="835.90" width="3.84" height="1.5" fill="#ce9178"/><rect x="1445.68" y="837.80" width="6.72" height="1.5" fill="#569cd6"/><rect x="1447.60" y="839.70" width="3.84" height="1.5" fill="#569cd6"/><rect x="1453.36" y="839.70" width="6.72" height="1.5" fill="#ce9178"/><rect x="1447.60" y="841.60" width="10.56" height="1.5" fill="#569cd6"/><rect x="1460.08" y="841.60" width="6.72" height="1.5" fill="#ce9178"/><rect x="1467.76" y="841.60" width="1.92" height="1.5" fill="#ce9178"/><rect x="1470.64" y="841.60" width="2.88" height="1.5" fill="#ce9178"/><rect x="1474.48" y="841.60" width="3.84" height="1.5" fill="#ce9178"/><rect x="1445.68" y="843.50" width="9.60" height="1.5" fill="#569cd6"/><rect x="1447.60" y="845.40" width="3.84" height="1.5" fill="#569cd6"/><rect x="1453.36" y="845.40" width="5.76" height="1.5" fill="#ce9178"/><rect x="1447.60" y="847.30" width="10.56" height="1.5" fill="#569cd6"/><rect x="1460.08" y="847.30" width="9.60" height="1.5" fill="#ce9178"/><rect x="1470.64" y="847.30" width="1.92" height="1.5" fill="#ce9178"/><rect x="1473.52" y="847.30" width="2.88" height="1.5" fill="#ce9178"/><rect x="1477.36" y="847.30" width="3.84" height="1.5" fill="#ce9178"/><rect x="1445.68" y="849.20" width="9.60" height="1.5" fill="#569cd6"/><rect x="1447.60" y="851.10" width="3.84" height="1.5" fill="#569cd6"/><rect x="1453.36" y="851.10" width="5.76" height="1.5" fill="#ce9178"/><rect x="1447.60" y="853.00" width="10.56" height="1.5" fill="#569cd6"/><rect x="1460.08" y="853.00" width="9.60" height="1.5" fill="#ce9178"/><rect x="1470.64" y="853.00" width="1.92" height="1.5" fill="#ce9178"/><rect x="1473.52" y="853.00" width="2.88" height="1.5" fill="#ce9178"/><rect x="1477.36" y="853.00" width="3.84" height="1.5" fill="#ce9178"/><rect x="1443.76" y="854.90" width="7.68" height="1.5" fill="#569cd6"/><rect x="1445.68" y="856.80" width="0.96" height="1.5" fill="#ce9178"/><rect x="1447.60" y="856.80" width="1.92" height="1.5" fill="#ce9178"/><rect x="1441.84" y="858.70" width="13.44" height="1.5" fill="#569cd6"/><rect x="1443.76" y="860.60" width="3.84" height="1.5" fill="#569cd6"/><rect x="1449.52" y="860.60" width="5.76" height="1.5" fill="#ce9178"/><rect x="1443.76" y="862.50" width="9.60" height="1.5" fill="#569cd6"/><rect x="1445.68" y="864.40" width="1.92" height="1.5" fill="#569cd6"/><rect x="1447.60" y="866.30" width="3.84" height="1.5" fill="#569cd6"/><rect x="1453.36" y="866.30" width="6.72" height="1.5" fill="#ce9178"/><rect x="1447.60" y="868.20" width="10.56" height="1.5" fill="#569cd6"/><rect x="1460.08" y="868.20" width="1.92" height="1.5" fill="#ce9178"/><rect x="1462.96" y="868.20" width="1.92" height="1.5" fill="#ce9178"/><rect x="1465.84" y="868.20" width="2.88" height="1.5" fill="#ce9178"/><rect x="1469.68" y="868.20" width="3.84" height="1.5" fill="#ce9178"/><rect x="1445.68" y="870.10" width="3.84" height="1.5" fill="#569cd6"/><rect x="1447.60" y="872.00" width="3.84" height="1.5" fill="#569cd6"/><rect x="1453.36" y="872.00" width="5.76" height="1.5" fill="#ce9178"/><rect x="1447.60" y="873.90" width="10.56" height="1.5" fill="#569cd6"/><rect x="1460.08" y="873.90" width="3.84" height="1.5" fill="#ce9178"/><rect x="1464.88" y="873.90" width="1.92" height="1.5" fill="#ce9178"/><rect x="1467.76" y="873.90" width="2.88" height="1.5" fill="#ce9178"/><rect x="1471.60" y="873.90" width="3.84" height="1.5" fill="#ce9178"/><rect x="1445.68" y="875.80" width="6.72" height="1.5" fill="#569cd6"/><rect x="1447.60" y="877.70" width="3.84" height="1.5" fill="#569cd6"/><rect x="1453.36" y="877.70" width="6.72" height="1.5" fill="#ce9178"/><rect x="1447.60" y="879.60" width="10.56" height="1.5" fill="#569cd6"/><rect x="1460.08" y="879.60" width="6.72" height="1.5" fill="#ce9178"/><rect x="1467.76" y="879.60" width="1.92" height="1.5" fill="#ce9178"/><rect x="1470.64" y="879.60" width="2.88" height="1.5" fill="#ce9178"/><rect x="1474.48" y="879.60" width="3.84" height="1.5" fill="#ce9178"/><rect x="1445.68" y="881.50" width="9.60" height="1.5" fill="#569cd6"/><rect x="1447.60" y="883.40" width="3.84" height="1.5" fill="#569cd6"/><rect x="1453.36" y="883.40" width="5.76" height="1.5" fill="#ce9178"/><rect x="1447.60" y="885.30" width="10.56" height="1.5" fill="#569cd6"/><rect x="1460.08" y="885.30" width="9.60" height="1.5" fill="#ce9178"/><rect x="1470.64" y="885.30" width="1.92" height="1.5" fill="#ce9178"/><rect x="1473.52" y="885.30" width="2.88" height="1.5" fill="#ce9178"/><rect x="1477.36" y="885.30" width="3.84" height="1.5" fill="#ce9178"/><rect x="1445.68" y="887.20" width="9.60" height="1.5" fill="#569cd6"/><rect x="1447.60" y="889.10" width="3.84" height="1.5" fill="#569cd6"/><rect x="1453.36" y="889.10" width="5.76" height="1.5" fill="#ce9178"/><rect x="1447.60" y="891.00" width="10.56" height="1.5" fill="#569cd6"/><rect x="1460.08" y="891.00" width="9.60" height="1.5" fill="#ce9178"/><rect x="1470.64" y="891.00" width="1.92" height="1.5" fill="#ce9178"/><rect x="1473.52" y="891.00" width="2.88" height="1.5" fill="#ce9178"/><rect x="1477.36" y="891.00" width="3.84" height="1.5" fill="#ce9178"/><rect x="1443.76" y="892.90" width="7.68" height="1.5" fill="#569cd6"/><rect x="1445.68" y="894.80" width="0.96" height="1.5" fill="#ce9178"/><rect x="1447.60" y="894.80" width="1.92" height="1.5" fill="#ce9178"/><rect x="1441.84" y="896.70" width="13.44" height="1.5" fill="#569cd6"/><rect x="1443.76" y="898.60" width="3.84" height="1.5" fill="#569cd6"/><rect x="1449.52" y="898.60" width="5.76" height="1.5" fill="#ce9178"/><rect x="1443.76" y="900.50" width="9.60" height="1.5" fill="#569cd6"/><rect x="1445.68" y="902.40" width="1.92" height="1.5" fill="#569cd6"/><rect x="1447.60" y="904.30" width="3.84" height="1.5" fill="#569cd6"/><rect x="1453.36" y="904.30" width="6.72" height="1.5" fill="#ce9178"/><rect x="1447.60" y="906.20" width="10.56" height="1.5" fill="#569cd6"/><rect x="1460.08" y="906.20" width="1.92" height="1.5" fill="#ce9178"/><rect x="1462.96" y="906.20" width="1.92" height="1.5" fill="#ce9178"/><rect x="1465.84" y="906.20" width="2.88" height="1.5" fill="#ce9178"/><rect x="1469.68" y="906.20" width="3.84" height="1.5" fill="#ce9178"/><rect x="1445.68" y="908.10" width="3.84" height="1.5" fill="#569cd6"/><rect x="1447.60" y="910.00" width="3.84" height="1.5" fill="#569cd6"/><rect x="1453.36" y="910.00" width="5.76" height="1.5" fill="#ce9178"/><rect x="1447.60" y="911.90" width="10.56" height="1.5" fill="#569cd6"/><rect x="1460.08" y="911.90" width="3.84" height="1.5" fill="#ce9178"/><rect x="1464.88" y="911.90" width="1.92" height="1.5" fill="#ce9178"/><rect x="1467.76" y="911.90" width="2.88" height="1.5" fill="#ce9178"/><rect x="1471.60" y="911.90" width="3.84" height="1.5" fill="#ce9178"/><rect x="1445.68" y="913.80" width="6.72" height="1.5" fill="#569cd6"/><rect x="1447.60" y="915.70" width="3.84" height="1.5" fill="#569cd6"/><rect x="1453.36" y="915.70" width="6.72" height="1.5" fill="#ce9178"/><rect x="1447.60" y="917.60" width="10.56" height="1.5" fill="#569cd6"/><rect x="1460.08" y="917.60" width="6.72" height="1.5" fill="#ce9178"/><rect x="1467.76" y="917.60" width="1.92" height="1.5" fill="#ce9178"/><rect x="1470.64" y="917.60" width="2.88" height="1.5" fill="#ce9178"/><rect x="1474.48" y="917.60" width="3.84" height="1.5" fill="#ce9178"/><rect x="1445.68" y="919.50" width="9.60" height="1.5" fill="#569cd6"/><rect x="1447.60" y="921.40" width="3.84" height="1.5" fill="#569cd6"/><rect x="1453.36" y="921.40" width="5.76" height="1.5" fill="#ce9178"/><rect x="1447.60" y="923.30" width="10.56" height="1.5" fill="#569cd6"/><rect x="1460.08" y="923.30" width="9.60" height="1.5" fill="#ce9178"/><rect x="1470.64" y="923.30" width="1.92" height="1.5" fill="#ce9178"/><rect x="1473.52" y="923.30" width="2.88" height="1.5" fill="#ce9178"/><rect x="1477.36" y="923.30" width="3.84" height="1.5" fill="#ce9178"/><rect x="1445.68" y="925.20" width="9.60" height="1.5" fill="#569cd6"/><rect x="1447.60" y="927.10" width="3.84" height="1.5" fill="#569cd6"/><rect x="1453.36" y="927.10" width="5.76" height="1.5" fill="#ce9178"/><rect x="1447.60" y="929.00" width="10.56" height="1.5" fill="#569cd6"/><rect x="1460.08" y="929.00" width="9.60" height="1.5" fill="#ce9178"/><rect x="1470.64" y="929.00" width="1.92" height="1.5" fill="#ce9178"/><rect x="1473.52" y="929.00" width="2.88" height="1.5" fill="#ce9178"/><rect x="1477.36" y="929.00" width="3.84" height="1.5" fill="#ce9178"/><rect x="1443.76" y="930.90" width="7.68" height="1.5" fill="#569cd6"/><rect x="1445.68" y="932.80" width="0.96" height="1.5" fill="#ce9178"/><rect x="1447.60" y="932.80" width="1.92" height="1.5" fill="#ce9178"/><rect x="1441.84" y="934.70" width="6.72" height="1.5" fill="#569cd6"/><rect x="1443.76" y="936.60" width="3.84" height="1.5" fill="#569cd6"/><rect x="1449.52" y="936.60" width="5.76" height="1.5" fill="#ce9178"/><rect x="1443.76" y="938.50" width="9.60" height="1.5" fill="#569cd6"/><rect x="1445.68" y="940.40" width="1.92" height="1.5" fill="#569cd6"/><rect x="1447.60" y="942.30" width="3.84" height="1.5" fill="#569cd6"/><rect x="1453.36" y="942.30" width="6.72" height="1.5" fill="#ce9178"/><rect x="1447.60" y="944.20" width="10.56" height="1.5" fill="#569cd6"/><rect x="1460.08" y="944.20" width="1.92" height="1.5" fill="#ce9178"/><rect x="1462.96" y="944.20" width="1.92" height="1.5" fill="#ce9178"/><rect x="1465.84" y="944.20" width="2.88" height="1.5" fill="#ce9178"/><rect x="1469.68" y="944.20" width="3.84" height="1.5" fill="#ce9178"/><rect x="1445.68" y="946.10" width="3.84" height="1.5" fill="#569cd6"/><rect x="1447.60" y="948.00" width="3.84" height="1.5" fill="#569cd6"/><rect x="1453.36" y="948.00" width="5.76" height="1.5" fill="#ce9178"/><rect x="1447.60" y="949.90" width="10.56" height="1.5" fill="#569cd6"/><rect x="1460.08" y="949.90" width="3.84" height="1.5" fill="#ce9178"/><rect x="1464.88" y="949.90" width="1.92" height="1.5" fill="#ce9178"/><rect x="1467.76" y="949.90" width="2.88" height="1.5" fill="#ce9178"/><rect x="1471.60" y="949.90" width="3.84" height="1.5" fill="#ce9178"/><rect x="1445.68" y="951.80" width="6.72" height="1.5" fill="#569cd6"/><rect x="1447.60" y="953.70" width="3.84" height="1.5" fill="#569cd6"/><rect x="1453.36" y="953.70" width="6.72" height="1.5" fill="#ce9178"/><rect x="1447.60" y="955.60" width="10.56" height="1.5" fill="#569cd6"/><rect x="1460.08" y="955.60" width="6.72" height="1.5" fill="#ce9178"/><rect x="1467.76" y="955.60" width="1.92" height="1.5" fill="#ce9178"/><rect x="1470.64" y="955.60" width="2.88" height="1.5" fill="#ce9178"/><rect x="1474.48" y="955.60" width="3.84" height="1.5" fill="#ce9178"/><rect x="1445.68" y="957.50" width="9.60" height="1.5" fill="#569cd6"/><rect x="1447.60" y="959.40" width="3.84" height="1.5" fill="#569cd6"/><rect x="1453.36" y="959.40" width="5.76" height="1.5" fill="#ce9178"/><rect x="1447.60" y="961.30" width="10.56" height="1.5" fill="#569cd6"/><rect x="1460.08" y="961.30" width="9.60" height="1.5" fill="#ce9178"/><rect x="1470.64" y="961.30" width="1.92" height="1.5" fill="#ce9178"/><rect x="1473.52" y="961.30" width="2.88" height="1.5" fill="#ce9178"/><rect x="1477.36" y="961.30" width="3.84" height="1.5" fill="#ce9178"/><rect x="1445.68" y="963.20" width="9.60" height="1.5" fill="#569cd6"/><rect x="1447.60" y="965.10" width="3.84" height="1.5" fill="#569cd6"/><rect x="1453.36" y="965.10" width="5.76" height="1.5" fill="#ce9178"/><rect x="1447.60" y="967.00" width="10.56" height="1.5" fill="#569cd6"/><rect x="1460.08" y="967.00" width="9.60" height="1.5" fill="#ce9178"/><rect x="1470.64" y="967.00" width="1.92" height="1.5" fill="#ce9178"/><rect x="1473.52" y="967.00" width="2.88" height="1.5" fill="#ce9178"/><rect x="1477.36" y="967.00" width="3.84" height="1.5" fill="#ce9178"/><rect x="1443.76" y="968.90" width="7.68" height="1.5" fill="#569cd6"/><rect x="1445.68" y="970.80" width="0.96" height="1.5" fill="#ce9178"/><rect x="1447.60" y="970.80" width="1.92" height="1.5" fill="#ce9178"/><rect x="1441.84" y="972.70" width="12.48" height="1.5" fill="#569cd6"/><rect x="1443.76" y="974.60" width="3.84" height="1.5" fill="#569cd6"/><rect x="1449.52" y="974.60" width="5.76" height="1.5" fill="#ce9178"/><rect x="1443.76" y="976.50" width="9.60" height="1.5" fill="#569cd6"/><rect x="1445.68" y="978.40" width="1.92" height="1.5" fill="#569cd6"/><rect x="1447.60" y="980.30" width="3.84" height="1.5" fill="#569cd6"/><rect x="1453.36" y="980.30" width="6.72" height="1.5" fill="#ce9178"/><rect x="1447.60" y="982.20" width="10.56" height="1.5" fill="#569cd6"/><rect x="1460.08" y="982.20" width="1.92" height="1.5" fill="#ce9178"/><rect x="1462.96" y="982.20" width="1.92" height="1.5" fill="#ce9178"/><rect x="1465.84" y="982.20" width="2.88" height="1.5" fill="#ce9178"/><rect x="1469.68" y="982.20" width="3.84" height="1.5" fill="#ce9178"/><rect x="1445.68" y="984.10" width="3.84" height="1.5" fill="#569cd6"/><rect x="1447.60" y="986.00" width="3.84" height="1.5" fill="#569cd6"/><rect x="1453.36" y="986.00" width="5.76" height="1.5" fill="#ce9178"/><rect x="1447.60" y="987.90" width="10.56" height="1.5" fill="#569cd6"/><rect x="1460.08" y="987.90" width="3.84" height="1.5" fill="#ce9178"/><rect x="1464.88" y="987.90" width="1.92" height="1.5" fill="#ce9178"/><rect x="1467.76" y="987.90" width="2.88" height="1.5" fill="#ce9178"/><rect x="1471.60" y="987.90" width="3.84" height="1.5" fill="#ce9178"/><rect x="1445.68" y="989.80" width="6.72" height="1.5" fill="#569cd6"/><rect x="1447.60" y="991.70" width="3.84" height="1.5" fill="#569cd6"/><rect x="1453.36" y="991.70" width="6.72" height="1.5" fill="#ce9178"/><rect x="1447.60" y="993.60" width="10.56" height="1.5" fill="#569cd6"/><rect x="1460.08" y="993.60" width="6.72" height="1.5" fill="#ce9178"/><rect x="1467.76" y="993.60" width="1.92" height="1.5" fill="#ce9178"/><rect x="1470.64" y="993.60" width="2.88" height="1.5" fill="#ce9178"/><rect x="1474.48" y="993.60" width="3.84" height="1.5" fill="#ce9178"/><rect x="1445.68" y="995.50" width="9.60" height="1.5" fill="#569cd6"/><rect x="1447.60" y="997.40" width="3.84" height="1.5" fill="#569cd6"/><rect x="1453.36" y="997.40" width="5.76" height="1.5" fill="#ce9178"/><rect x="1447.60" y="999.30" width="10.56" height="1.5" fill="#569cd6"/><rect x="1460.08" y="999.30" width="9.60" height="1.5" fill="#ce9178"/><rect x="1470.64" y="999.30" width="1.92" height="1.5" fill="#ce9178"/><rect x="1473.52" y="999.30" width="2.88" height="1.5" fill="#ce9178"/><rect x="1477.36" y="999.30" width="3.84" height="1.5" fill="#ce9178"/><rect x="1445.68" y="1001.20" width="9.60" height="1.5" fill="#569cd6"/><rect x="1447.60" y="1003.10" width="3.84" height="1.5" fill="#569cd6"/><rect x="1453.36" y="1003.10" width="5.76" height="1.5" fill="#ce9178"/><rect x="1447.60" y="1005.00" width="10.56" height="1.5" fill="#569cd6"/><rect x="1460.08" y="1005.00" width="9.60" height="1.5" fill="#ce9178"/><rect x="1470.64" y="1005.00" width="1.92" height="1.5" fill="#ce9178"/><rect x="1473.52" y="1005.00" width="2.88" height="1.5" fill="#ce9178"/><rect x="1477.36" y="1005.00" width="3.84" height="1.5" fill="#ce9178"/><rect x="1443.76" y="1006.90" width="7.68" height="1.5" fill="#569cd6"/><rect x="1445.68" y="1008.80" width="0.96" height="1.5" fill="#ce9178"/><rect x="1447.60" y="1008.80" width="1.92" height="1.5" fill="#ce9178"/><rect x="1441.84" y="1010.70" width="12.48" height="1.5" fill="#569cd6"/><rect x="1443.76" y="1012.60" width="3.84" height="1.5" fill="#569cd6"/><rect x="1449.52" y="1012.60" width="5.76" height="1.5" fill="#ce9178"/><rect x="1443.76" y="1014.50" width="9.60" height="1.5" fill="#569cd6"/><rect x="1445.68" y="1016.40" width="1.92" height="1.5" fill="#569cd6"/><rect x="1447.60" y="1018.30" width="3.84" height="1.5" fill="#569cd6"/><rect x="1453.36" y="1018.30" width="6.72" height="1.5" fill="#ce9178"/><rect x="1447.60" y="1020.20" width="10.56" height="1.5" fill="#569cd6"/><rect x="1460.08" y="1020.20" width="1.92" height="1.5" fill="#ce9178"/><rect x="1462.96" y="1020.20" width="1.92" height="1.5" fill="#ce9178"/><rect x="1465.84" y="1020.20" width="2.88" height="1.5" fill="#ce9178"/><rect x="1469.68" y="1020.20" width="3.84" height="1.5" fill="#ce9178"/><rect x="1445.68" y="1022.10" width="3.84" height="1.5" fill="#569cd6"/><rect x="1447.60" y="1024.00" width="3.84" height="1.5" fill="#569cd6"/><rect x="1453.36" y="1024.00" width="5.76" height="1.5" fill="#ce9178"/><rect x="1447.60" y="1025.90" width="10.56" height="1.5" fill="#569cd6"/><rect x="1460.08" y="1025.90" width="3.84" height="1.5" fill="#ce9178"/><rect x="1464.88" y="1025.90" width="1.92" height="1.5" fill="#ce9178"/><rect x="1467.76" y="1025.90" width="2.88" height="1.5" fill="#ce9178"/><rect x="1471.60" y="1025.90" width="3.84" height="1.5" fill="#ce9178"/><rect x="1445.68" y="1027.80" width="6.72" height="1.5" fill="#569cd6"/><rect x="1447.60" y="1029.70" width="3.84" height="1.5" fill="#569cd6"/><rect x="1453.36" y="1029.70" width="6.72" height="1.5" fill="#ce9178"/><rect x="1447.60" y="1031.60" width="10.56" height="1.5" fill="#569cd6"/><rect x="1460.08" y="1031.60" width="6.72" height="1.5" fill="#ce9178"/><rect x="1467.76" y="1031.60" width="1.92" height="1.5" fill="#ce9178"/><rect x="1470.64" y="1031.60" width="2.88" height="1.5" fill="#ce9178"/><rect x="1474.48" y="1031.60" width="3.84" height="1.5" fill="#ce9178"/><rect x="1445.68" y="1033.50" width="9.60" height="1.5" fill="#569cd6"/><rect x="1447.60" y="1035.40" width="3.84" height="1.5" fill="#569cd6"/><rect x="1453.36" y="1035.40" width="5.76" height="1.5" fill="#ce9178"/><rect x="1447.60" y="1037.30" width="10.56" height="1.5" fill="#569cd6"/><rect x="1460.08" y="1037.30" width="9.60" height="1.5" fill="#ce9178"/><rect x="1470.64" y="1037.30" width="1.92" height="1.5" fill="#ce9178"/><rect x="1473.52" y="1037.30" width="2.88" height="1.5" fill="#ce9178"/><rect x="1477.36" y="1037.30" width="3.84" height="1.5" fill="#ce9178"/><rect x="1445.68" y="1039.20" width="9.60" height="1.5" fill="#569cd6"/><rect x="1447.60" y="1041.10" width="3.84" height="1.5" fill="#569cd6"/><rect x="1453.36" y="1041.10" width="5.76" height="1.5" fill="#ce9178"/><rect x="1447.60" y="1043.00" width="10.56" height="1.5" fill="#569cd6"/><rect x="1460.08" y="1043.00" width="9.60" height="1.5" fill="#ce9178"/><rect x="1470.64" y="1043.00" width="1.92" height="1.5" fill="#ce9178"/><rect x="1473.52" y="1043.00" width="2.88" height="1.5" fill="#ce9178"/><rect x="1477.36" y="1043.00" width="3.84" height="1.5" fill="#ce9178"/><rect x="1443.76" y="1044.90" width="7.68" height="1.5" fill="#569cd6"/><rect x="1445.68" y="1046.80" width="0.96" height="1.5" fill="#ce9178"/><rect x="1447.60" y="1046.80" width="1.92" height="1.5" fill="#ce9178"/><rect x="1441.84" y="1048.70" width="4.80" height="1.5" fill="#569cd6"/><rect x="1443.76" y="1050.60" width="3.84" height="1.5" fill="#569cd6"/><rect x="1449.52" y="1050.60" width="5.76" height="1.5" fill="#ce9178"/><rect x="1443.76" y="1052.50" width="9.60" height="1.5" fill="#569cd6"/><rect x="1445.68" y="1054.40" width="1.92" height="1.5" fill="#569cd6"/><rect x="1447.60" y="1056.30" width="3.84" height="1.5" fill="#569cd6"/><rect x="1453.36" y="1056.30" width="6.72" height="1.5" fill="#ce9178"/><rect x="1447.60" y="1058.20" width="10.56" height="1.5" fill="#569cd6"/><rect x="1460.08" y="1058.20" width="1.92" height="1.5" fill="#ce9178"/><rect x="1462.96" y="1058.20" width="1.92" height="1.5" fill="#ce9178"/><rect x="1465.84" y="1058.20" width="2.88" height="1.5" fill="#ce9178"/><rect x="1469.68" y="1058.20" width="3.84" height="1.5" fill="#ce9178"/><rect x="1445.68" y="1060.10" width="3.84" height="1.5" fill="#569cd6"/><rect x="1447.60" y="1062.00" width="3.84" height="1.5" fill="#569cd6"/><rect x="1453.36" y="1062.00" width="5.76" height="1.5" fill="#ce9178"/><rect x="1447.60" y="1063.90" width="10.56" height="1.5" fill="#569cd6"/><rect x="1460.08" y="1063.90" width="3.84" height="1.5" fill="#ce9178"/><rect x="1464.88" y="1063.90" width="1.92" height="1.5" fill="#ce9178"/><rect x="1467.76" y="1063.90" width="2.88" height="1.5" fill="#ce9178"/><rect x="1471.60" y="1063.90" width="3.84" height="1.5" fill="#ce9178"/><rect x="1445.68" y="1065.80" width="6.72" height="1.5" fill="#569cd6"/><rect x="1447.60" y="1067.70" width="3.84" height="1.5" fill="#569cd6"/><rect x="1453.36" y="1067.70" width="6.72" height="1.5" fill="#ce9178"/><rect x="1447.60" y="1069.60" width="10.56" height="1.5" fill="#569cd6"/><rect x="1460.08" y="1069.60" width="6.72" height="1.5" fill="#ce9178"/><rect x="1467.76" y="1069.60" width="1.92" height="1.5" fill="#ce9178"/><rect x="1470.64" y="1069.60" width="2.88" height="1.5" fill="#ce9178"/><rect x="1474.48" y="1069.60" width="3.84" height="1.5" fill="#ce9178"/><rect x="1445.68" y="1071.50" width="9.60" height="1.5" fill="#569cd6"/><rect x="1447.60" y="1073.40" width="3.84" height="1.5" fill="#569cd6"/><rect x="1453.36" y="1073.40" width="5.76" height="1.5" fill="#ce9178"/><rect x="1447.60" y="1075.30" width="10.56" height="1.5" fill="#569cd6"/><rect x="1460.08" y="1075.30" width="9.60" height="1.5" fill="#ce9178"/><rect x="1470.64" y="1075.30" width="1.92" height="1.5" fill="#ce9178"/><rect x="1473.52" y="1075.30" width="2.88" height="1.5" fill="#ce9178"/><rect x="1477.36" y="1075.30" width="3.84" height="1.5" fill="#ce9178"/><rect x="1445.68" y="1077.20" width="9.60" height="1.5" fill="#569cd6"/><rect x="1447.60" y="1079.10" width="3.84" height="1.5" fill="#569cd6"/><rect x="1453.36" y="1079.10" width="5.76" height="1.5" fill="#ce9178"/><rect x="1447.60" y="1081.00" width="10.56" height="1.5" fill="#569cd6"/><rect x="1460.08" y="1081.00" width="9.60" height="1.5" fill="#ce9178"/><rect x="1470.64" y="1081.00" width="1.92" height="1.5" fill="#ce9178"/><rect x="1473.52" y="1081.00" width="2.88" height="1.5" fill="#ce9178"/><rect x="1477.36" y="1081.00" width="3.84" height="1.5" fill="#ce9178"/><rect x="1443.76" y="1082.90" width="7.68" height="1.5" fill="#569cd6"/><rect x="1445.68" y="1084.80" width="0.96" height="1.5" fill="#ce9178"/><rect x="1447.60" y="1084.80" width="1.92" height="1.5" fill="#ce9178"/><rect x="1441.84" y="1086.70" width="10.56" height="1.5" fill="#569cd6"/><rect x="1443.76" y="1088.60" width="3.84" height="1.5" fill="#569cd6"/><rect x="1449.52" y="1088.60" width="5.76" height="1.5" fill="#ce9178"/><rect x="1443.76" y="1090.50" width="9.60" height="1.5" fill="#569cd6"/><rect x="1445.68" y="1092.40" width="1.92" height="1.5" fill="#569cd6"/><rect x="1447.60" y="1094.30" width="3.84" height="1.5" fill="#569cd6"/><rect x="1453.36" y="1094.30" width="6.72" height="1.5" fill="#ce9178"/><rect x="1447.60" y="1096.20" width="10.56" height="1.5" fill="#569cd6"/><rect x="1460.08" y="1096.20" width="1.92" height="1.5" fill="#ce9178"/><rect x="1462.96" y="1096.20" width="1.92" height="1.5" fill="#ce9178"/><rect x="1465.84" y="1096.20" width="2.88" height="1.5" fill="#ce9178"/><rect x="1469.68" y="1096.20" width="3.84" height="1.5" fill="#ce9178"/><rect x="1445.68" y="1098.10" width="3.84" height="1.5" fill="#569cd6"/><rect x="1447.60" y="1100.00" width="3.84" height="1.5" fill="#569cd6"/><rect x="1453.36" y="1100.00" width="5.76" height="1.5" fill="#ce9178"/><rect x="1447.60" y="1101.90" width="10.56" height="1.5" fill="#569cd6"/><rect x="1460.08" y="1101.90" width="3.84" height="1.5" fill="#ce9178"/><rect x="1464.88" y="1101.90" width="1.92" height="1.5" fill="#ce9178"/><rect x="1467.76" y="1101.90" width="2.88" height="1.5" fill="#ce9178"/><rect x="1471.60" y="1101.90" width="3.84" height="1.5" fill="#ce9178"/><rect x="1445.68" y="1103.80" width="6.72" height="1.5" fill="#569cd6"/><rect x="1447.60" y="1105.70" width="3.84" height="1.5" fill="#569cd6"/><rect x="1453.36" y="1105.70" width="6.72" height="1.5" fill="#ce9178"/><rect x="1447.60" y="1107.60" width="10.56" height="1.5" fill="#569cd6"/><rect x="1460.08" y="1107.60" width="6.72" height="1.5" fill="#ce9178"/><rect x="1467.76" y="1107.60" width="1.92" height="1.5" fill="#ce9178"/><rect x="1470.64" y="1107.60" width="2.88" height="1.5" fill="#ce9178"/><rect x="1474.48" y="1107.60" width="3.84" height="1.5" fill="#ce9178"/><rect x="1445.68" y="1109.50" width="9.60" height="1.5" fill="#569cd6"/><rect x="1447.60" y="1111.40" width="3.84" height="1.5" fill="#569cd6"/><rect x="1453.36" y="1111.40" width="5.76" height="1.5" fill="#ce9178"/><rect x="1447.60" y="1113.30" width="10.56" height="1.5" fill="#569cd6"/><rect x="1460.08" y="1113.30" width="9.60" height="1.5" fill="#ce9178"/><rect x="1470.64" y="1113.30" width="1.92" height="1.5" fill="#ce9178"/><rect x="1473.52" y="1113.30" width="2.88" height="1.5" fill="#ce9178"/><rect x="1477.36" y="1113.30" width="3.84" height="1.5" fill="#ce9178"/><rect x="1445.68" y="1115.20" width="9.60" height="1.5" fill="#569cd6"/><rect x="1447.60" y="1117.10" width="3.84" height="1.5" fill="#569cd6"/><rect x="1453.36" y="1117.10" width="5.76" height="1.5" fill="#ce9178"/><rect x="1447.60" y="1119.00" width="10.56" height="1.5" fill="#569cd6"/><rect x="1460.08" y="1119.00" width="9.60" height="1.5" fill="#ce9178"/><rect x="1470.64" y="1119.00" width="1.92" height="1.5" fill="#ce9178"/><rect x="1473.52" y="1119.00" width="2.88" height="1.5" fill="#ce9178"/><rect x="1477.36" y="1119.00" width="3.84" height="1.5" fill="#ce9178"/><rect x="1443.76" y="1120.90" width="7.68" height="1.5" fill="#569cd6"/><rect x="1445.68" y="1122.80" width="0.96" height="1.5" fill="#ce9178"/><rect x="1447.60" y="1122.80" width="1.92" height="1.5" fill="#ce9178"/><rect x="1441.84" y="1124.70" width="10.56" height="1.5" fill="#569cd6"/><rect x="1443.76" y="1126.60" width="3.84" height="1.5" fill="#569cd6"/><rect x="1449.52" y="1126.60" width="5.76" height="1.5" fill="#ce9178"/><rect x="1443.76" y="1128.50" width="9.60" height="1.5" fill="#569cd6"/><rect x="1445.68" y="1130.40" width="1.92" height="1.5" fill="#569cd6"/><rect x="1447.60" y="1132.30" width="3.84" height="1.5" fill="#569cd6"/><rect x="1453.36" y="1132.30" width="6.72" height="1.5" fill="#ce9178"/><rect x="1447.60" y="1134.20" width="10.56" height="1.5" fill="#569cd6"/><rect x="1460.08" y="1134.20" width="1.92" height="1.5" fill="#ce9178"/><rect x="1462.96" y="1134.20" width="1.92" height="1.5" fill="#ce9178"/><rect x="1465.84" y="1134.20" width="2.88" height="1.5" fill="#ce9178"/><rect x="1469.68" y="1134.20" width="3.84" height="1.5" fill="#ce9178"/><rect x="1445.68" y="1136.10" width="3.84" height="1.5" fill="#569cd6"/><rect x="1447.60" y="1138.00" width="3.84" height="1.5" fill="#569cd6"/><rect x="1453.36" y="1138.00" width="5.76" height="1.5" fill="#ce9178"/><rect x="1447.60" y="1139.90" width="10.56" height="1.5" fill="#569cd6"/><rect x="1460.08" y="1139.90" width="3.84" height="1.5" fill="#ce9178"/><rect x="1464.88" y="1139.90" width="1.92" height="1.5" fill="#ce9178"/><rect x="1467.76" y="1139.90" width="2.88" height="1.5" fill="#ce9178"/><rect x="1471.60" y="1139.90" width="3.84" height="1.5" fill="#ce9178"/><rect x="1445.68" y="1141.80" width="6.72" height="1.5" fill="#569cd6"/><rect x="1447.60" y="1143.70" width="3.84" height="1.5" fill="#569cd6"/><rect x="1453.36" y="1143.70" width="6.72" height="1.5" fill="#ce9178"/><rect x="1447.60" y="1145.60" width="10.56" height="1.5" fill="#569cd6"/><rect x="1460.08" y="1145.60" width="6.72" height="1.5" fill="#ce9178"/><rect x="1467.76" y="1145.60" width="1.92" height="1.5" fill="#ce9178"/><rect x="1470.64" y="1145.60" width="2.88" height="1.5" fill="#ce9178"/><rect x="1474.48" y="1145.60" width="3.84" height="1.5" fill="#ce9178"/><rect x="1445.68" y="1147.50" width="9.60" height="1.5" fill="#569cd6"/><rect x="1447.60" y="1149.40" width="3.84" height="1.5" fill="#569cd6"/><rect x="1453.36" y="1149.40" width="5.76" height="1.5" fill="#ce9178"/><rect x="1447.60" y="1151.30" width="10.56" height="1.5" fill="#569cd6"/><rect x="1460.08" y="1151.30" width="9.60" height="1.5" fill="#ce9178"/><rect x="1470.64" y="1151.30" width="1.92" height="1.5" fill="#ce9178"/><rect x="1473.52" y="1151.30" width="2.88" height="1.5" fill="#ce9178"/><rect x="1477.36" y="1151.30" width="3.84" height="1.5" fill="#ce9178"/><rect x="1445.68" y="1153.20" width="9.60" height="1.5" fill="#569cd6"/><rect x="1447.60" y="1155.10" width="3.84" height="1.5" fill="#569cd6"/><rect x="1453.36" y="1155.10" width="5.76" height="1.5" fill="#ce9178"/><rect x="1447.60" y="1157.00" width="10.56" height="1.5" fill="#569cd6"/><rect x="1460.08" y="1157.00" width="9.60" height="1.5" fill="#ce9178"/><rect x="1470.64" y="1157.00" width="1.92" height="1.5" fill="#ce9178"/><rect x="1473.52" y="1157.00" width="2.88" height="1.5" fill="#ce9178"/><rect x="1477.36" y="1157.00" width="3.84" height="1.5" fill="#ce9178"/><rect x="1443.76" y="1158.90" width="7.68" height="1.5" fill="#569cd6"/><rect x="1445.68" y="1160.80" width="0.96" height="1.5" fill="#ce9178"/><rect x="1447.60" y="1160.80" width="1.92" height="1.5" fill="#ce9178"/><rect x="1441.84" y="1162.70" width="7.68" height="1.5" fill="#569cd6"/><rect x="1443.76" y="1164.60" width="3.84" height="1.5" fill="#569cd6"/><rect x="1449.52" y="1164.60" width="5.76" height="1.5" fill="#ce9178"/><rect x="1443.76" y="1166.50" width="9.60" height="1.5" fill="#569cd6"/><rect x="1445.68" y="1168.40" width="1.92" height="1.5" fill="#569cd6"/><rect x="1447.60" y="1170.30" width="3.84" height="1.5" fill="#569cd6"/><rect x="1453.36" y="1170.30" width="6.72" height="1.5" fill="#ce9178"/><rect x="1447.60" y="1172.20" width="10.56" height="1.5" fill="#569cd6"/><rect x="1460.08" y="1172.20" width="1.92" height="1.5" fill="#ce9178"/><rect x="1462.96" y="1172.20" width="1.92" height="1.5" fill="#ce9178"/><rect x="1465.84" y="1172.20" width="2.88" height="1.5" fill="#ce9178"/><rect x="1469.68" y="1172.20" width="3.84" height="1.5" fill="#ce9178"/><rect x="1445.68" y="1174.10" width="3.84" height="1.5" fill="#569cd6"/><rect x="1447.60" y="1176.00" width="3.84" height="1.5" fill="#569cd6"/><rect x="1453.36" y="1176.00" width="5.76" height="1.5" fill="#ce9178"/><rect x="1447.60" y="1177.90" width="10.56" height="1.5" fill="#569cd6"/><rect x="1460.08" y="1177.90" width="3.84" height="1.5" fill="#ce9178"/><rect x="1464.88" y="1177.90" width="1.92" height="1.5" fill="#ce9178"/><rect x="1467.76" y="1177.90" width="2.88" height="1.5" fill="#ce9178"/><rect x="1471.60" y="1177.90" width="3.84" height="1.5" fill="#ce9178"/><rect x="1445.68" y="1179.80" width="6.72" height="1.5" fill="#569cd6"/><rect x="1447.60" y="1181.70" width="3.84" height="1.5" fill="#569cd6"/><rect x="1453.36" y="1181.70" width="6.72" height="1.5" fill="#ce9178"/><rect x="1447.60" y="1183.60" width="10.56" height="1.5" fill="#569cd6"/><rect x="1460.08" y="1183.60" width="6.72" height="1.5" fill="#ce9178"/><rect x="1467.76" y="1183.60" width="1.92" height="1.5" fill="#ce9178"/><rect x="1470.64" y="1183.60" width="2.88" height="1.5" fill="#ce9178"/><rect x="1474.48" y="1183.60" width="3.84" height="1.5" fill="#ce9178"/><rect x="1445.68" y="1185.50" width="9.60" height="1.5" fill="#569cd6"/><rect x="1447.60" y="1187.40" width="3.84" height="1.5" fill="#569cd6"/><rect x="1453.36" y="1187.40" width="5.76" height="1.5" fill="#ce9178"/><rect x="1447.60" y="1189.30" width="10.56" height="1.5" fill="#569cd6"/><rect x="1460.08" y="1189.30" width="9.60" height="1.5" fill="#ce9178"/><rect x="1470.64" y="1189.30" width="1.92" height="1.5" fill="#ce9178"/><rect x="1473.52" y="1189.30" width="2.88" height="1.5" fill="#ce9178"/><rect x="1477.36" y="1189.30" width="3.84" height="1.5" fill="#ce9178"/><rect x="1445.68" y="1191.20" width="9.60" height="1.5" fill="#569cd6"/><rect x="1447.60" y="1193.10" width="3.84" height="1.5" fill="#569cd6"/><rect x="1453.36" y="1193.10" width="5.76" height="1.5" fill="#ce9178"/><rect x="1447.60" y="1195.00" width="10.56" height="1.5" fill="#569cd6"/><rect x="1460.08" y="1195.00" width="9.60" height="1.5" fill="#ce9178"/><rect x="1470.64" y="1195.00" width="1.92" height="1.5" fill="#ce9178"/><rect x="1473.52" y="1195.00" width="2.88" height="1.5" fill="#ce9178"/><rect x="1477.36" y="1195.00" width="3.84" height="1.5" fill="#ce9178"/><rect x="1443.76" y="1196.90" width="7.68" height="1.5" fill="#569cd6"/><rect x="1445.68" y="1198.80" width="0.96" height="1.5" fill="#ce9178"/><rect x="1447.60" y="1198.80" width="1.92" height="1.5" fill="#ce9178"/><rect x="1441.84" y="1200.70" width="4.80" height="1.5" fill="#569cd6"/><rect x="1443.76" y="1202.60" width="3.84" height="1.5" fill="#569cd6"/><rect x="1449.52" y="1202.60" width="5.76" height="1.5" fill="#ce9178"/><rect x="1443.76" y="1204.50" width="9.60" height="1.5" fill="#569cd6"/><rect x="1445.68" y="1206.40" width="1.92" height="1.5" fill="#569cd6"/><rect x="1447.60" y="1208.30" width="3.84" height="1.5" fill="#569cd6"/><rect x="1453.36" y="1208.30" width="6.72" height="1.5" fill="#ce9178"/><rect x="1447.60" y="1210.20" width="10.56" height="1.5" fill="#569cd6"/><rect x="1460.08" y="1210.20" width="1.92" height="1.5" fill="#ce9178"/><rect x="1462.96" y="1210.20" width="1.92" height="1.5" fill="#ce9178"/><rect x="1465.84" y="1210.20" width="2.88" height="1.5" fill="#ce9178"/><rect x="1469.68" y="1210.20" width="3.84" height="1.5" fill="#ce9178"/><rect x="1445.68" y="1212.10" width="3.84" height="1.5" fill="#569cd6"/><rect x="1447.60" y="1214.00" width="3.84" height="1.5" fill="#569cd6"/><rect x="1453.36" y="1214.00" width="5.76" height="1.5" fill="#ce9178"/><rect x="1447.60" y="1215.90" width="10.56" height="1.5" fill="#569cd6"/><rect x="1460.08" y="1215.90" width="3.84" height="1.5" fill="#ce9178"/><rect x="1464.88" y="1215.90" width="1.92" height="1.5" fill="#ce9178"/><rect x="1467.76" y="1215.90" width="2.88" height="1.5" fill="#ce9178"/><rect x="1471.60" y="1215.90" width="3.84" height="1.5" fill="#ce9178"/><rect x="1445.68" y="1217.80" width="6.72" height="1.5" fill="#569cd6"/><rect x="1447.60" y="1219.70" width="3.84" height="1.5" fill="#569cd6"/><rect x="1453.36" y="1219.70" width="6.72" height="1.5" fill="#ce9178"/></g><rect x="1438" y="249" width="55" height="1.6" fill="#b01818" opacity="0.85"/><rect x="1438" y="291" width="55" height="1.6" fill="#b01818" opacity="0.85"/><rect x="1438" y="345" width="55" height="1.6" fill="#b01818" opacity="0.85"/><rect x="1438" y="480" width="55" height="1.6" fill="#b01818" opacity="0.85"/><rect x="1438" y="522" width="55" height="1.6" fill="#b01818" opacity="0.85"/><rect x="1438" y="576" width="55" height="1.6" fill="#b01818" opacity="0.85"/><rect x="1438" y="698" width="55" height="1.6" fill="#b01818" opacity="0.85"/><rect x="1438" y="739" width="55" height="1.6" fill="#b01818" opacity="0.85"/><rect x="1438" y="793" width="55" height="1.6" fill="#b01818" opacity="0.85"/><rect x="1438" y="151.40" width="12" height="2.2" fill="#d0d0d0" opacity="0.8"/></svg>
<div class="a" style="left:1429px;top:130px;width:2px;height:1091px;background:#161616"></div>
<div class="a" style="left:1493px;top:130px;width:1px;height:1091px;background:#161616"></div>
<div class="a" style="left:1494px;top:149px;width:19px;height:2px;background:#a0a0a0"></div>
<div class="a" style="left:1498px;top:146px;width:8px;height:8px;background:#9a9a9a"></div>
<div class="a" style="left:1507px;top:233px;width:6px;height:7px;background:#e51400"></div>
<div class="a" style="left:1507px;top:270px;width:6px;height:7px;background:#e51400"></div>
<div class="a" style="left:1507px;top:317px;width:6px;height:7px;background:#e51400"></div>
<div class="a" style="left:1507px;top:436px;width:6px;height:7px;background:#e51400"></div>
<div class="a" style="left:1507px;top:473px;width:6px;height:7px;background:#e51400"></div>
<div class="a" style="left:1507px;top:520px;width:6px;height:7px;background:#e51400"></div>
<div class="a" style="left:1507px;top:627px;width:6px;height:7px;background:#e51400"></div>
<div class="a" style="left:1507px;top:664px;width:6px;height:7px;background:#e51400"></div>
<div class="a" style="left:1507px;top:711px;width:6px;height:7px;background:#e51400"></div>
<div class="a" style="left:1494px;top:730px;width:6px;height:9px;background:#a0603a"></div>
<div class="a" style="left:1571.5px;top:178.9px;font:bold 55px/66.0px 'Liberation Sans',sans-serif;color:#3b4151;white-space:nowrap"><span class="fit" style="width:193.5px">Mos API</span></div>
<div class="a" style="left:1775px;top:180px;width:69px;height:34px;border-radius:17px;background:#7d8492"></div>
<div class="a" style="left:1786px;top:186.6px;font:bold 20.5px/24.6px 'Liberation Sans',sans-serif;color:#ffffff;white-space:nowrap"><span class="fit" style="width:46px">1.0.0</span></div>
<div class="a" style="left:1850.5px;top:180px;width:86.5px;height:34px;border-radius:17px;background:#89bf04"></div>
<div class="a" style="left:1857px;top:186.6px;font:bold 20.5px/24.6px 'Liberation Sans',sans-serif;color:#ffffff;white-space:nowrap"><span class="fit" style="width:74px">OAS 3.1</span></div>
<div class="a" style="left:1571.5px;top:250.5px;font:normal 19.5px/23.4px 'Liberation Sans',sans-serif;color:#4990e2;white-space:nowrap"><span class="fit" style="width:264px">http://openapi-preview.example/</span></div>
<div class="a" style="left:1571.5px;top:306.5px;font:normal 19.5px/23.4px 'Liberation Sans',sans-serif;color:#3b4151;white-space:nowrap"><span class="fit" style="width:71px">Mos API</span></div>
<div class="a" style="left:1542px;top:401px;width:982px;height:158px;background:#ffffff;box-shadow:0 1px 3px rgba(0,0,0,0.12)"></div>
<div class="a" style="left:1571.5px;top:448.5px;font:bold 18.5px/22.2px 'Liberation Sans',sans-serif;color:#3b4151;white-space:nowrap"><span class="fit" style="width:63px">Servers</span></div>
<div class="a" style="left:1571px;top:473px;width:394px;height:42px;border:2.5px solid #41444e;border-radius:5px;background:#f7f7f7;box-shadow:0 1px 2px 0 rgba(0,0,0,0.25)"></div>
<div class="a" style="left:1588.5px;top:483.6px;font:bold 21px/25.2px 'Liberation Sans',sans-serif;color:#3b4151;white-space:nowrap"><span class="fit" style="width:293px">http://localhost:8000/mos/api</span></div>
<svg style="left:1926px;top:489px" width="16" height="11" viewBox="0 0 16 11"><path d="M2 2 L8 8 L14 2" stroke="#222" stroke-width="2.6" fill="none"/></svg>
<div class="a" style="left:1586px;top:605.8px;font:bold 38px/45.6px 'Liberation Sans',sans-serif;color:#3b4151;white-space:nowrap"><span class="fit" style="width:119.5px">default</span></div>
<svg style="left:2429px;top:618px" width="29" height="17" viewBox="0 0 29 17"><path d="M2 15 L14.5 2.5 L27 15" stroke="#111" stroke-width="2.4" fill="none"/></svg>
<div class="a" style="left:1571px;top:664px;width:924px;height:1px;background:#d8d9dc"></div>
<div class="a" style="left:1571px;top:673.7px;width:924px;height:57.7px;border:1.8px solid #61affe;border-radius:5px;background:#ecf4fd;box-shadow:0 0 3px rgba(0,0,0,0.19)"></div>
<div class="a" style="left:1579px;top:681.7px;width:114.5px;height:41px;border-radius:4px;background:#61affe"></div>
<div class="a" style="left:1619.5px;top:692.2px;font:bold 19.5px/23.4px 'Liberation Sans',sans-serif;color:#ffffff;white-space:nowrap"><span class="fit" style="width:33.5px">GET</span></div>
<div class="a" style="left:1707.5px;top:693.1px;font:normal 21px/25.2px 'Liberation Mono',monospace;color:#3b4151;white-space:nowrap;-webkit-text-stroke:0.55px"><span class="fit" style="width:94px">/categories</span></div>
<div class="a" style="left:1817.0px;top:692.3px;font:normal 20.5px/24.6px 'Liberation Sans',sans-serif;color:#3b4151;white-space:nowrap"><span class="fit" style="width:146px">Get all categories</span></div>
<svg style="left:2451px;top:693.7px" width="27" height="17" viewBox="0 0 27 17"><path d="M2 2.5 L13.5 14 L25 2.5" stroke="#111" stroke-width="2.4" fill="none"/></svg>
<div class="a" style="left:1571px;top:753.2px;width:924px;height:57.7px;border:1.8px solid #49cc90;border-radius:5px;background:#e8f6ef;box-shadow:0 0 3px rgba(0,0,0,0.19)"></div>
<div class="a" style="left:1579px;top:761.2px;width:114.5px;height:41px;border-radius:4px;background:#49cc90"></div>
<div class="a" style="left:1614.0px;top:771.8px;font:bold 19.5px/23.4px 'Liberation Sans',sans-serif;color:#ffffff;white-space:nowrap"><span class="fit" style="width:44.5px">POST</span></div>
<div class="a" style="left:1707.5px;top:772.7px;font:normal 21px/25.2px 'Liberation Mono',monospace;color:#3b4151;white-space:nowrap;-webkit-text-stroke:0.55px"><span class="fit" style="width:94px">/categories</span></div>
<div class="a" style="left:1817.0px;top:771.8px;font:normal 20.5px/24.6px 'Liberation Sans',sans-serif;color:#3b4151;white-space:nowrap"><span class="fit" style="width:190px">Create a new category</span></div>
<svg style="left:2451px;top:773.2px" width="27" height="17" viewBox="0 0 27 17"><path d="M2 2.5 L13.5 14 L25 2.5" stroke="#111" stroke-width="2.4" fill="none"/></svg>
<div class="a" style="left:1571px;top:832.8px;width:924px;height:57.7px;border:1.8px solid #61affe;border-radius:5px;background:#ecf4fd;box-shadow:0 0 3px rgba(0,0,0,0.19)"></div>
<div class="a" style="left:1579px;top:840.8px;width:114.5px;height:41px;border-radius:4px;background:#61affe"></div>
<div class="a" style="left:1619.5px;top:851.3px;font:bold 19.5px/23.4px 'Liberation Sans',sans-serif;color:#ffffff;white-space:nowrap"><span class="fit" style="width:33.5px">GET</span></div>
<div class="a" style="left:1707.5px;top:852.2px;font:normal 21px/25.2px 'Liberation Mono',monospace;color:#3b4151;white-space:nowrap;-webkit-text-stroke:0.55px"><span class="fit" style="width:136.5px">/categories/{id}</span></div>
<div class="a" style="left:1859.5px;top:851.4px;font:normal 20.5px/24.6px 'Liberation Sans',sans-serif;color:#3b4151;white-space:nowrap"><span class="fit" style="width:170px">Get a category by ID</span></div>
<svg style="left:2451px;top:852.8px" width="27" height="17" viewBox="0 0 27 17"><path d="M2 2.5 L13.5 14 L25 2.5" stroke="#111" stroke-width="2.4" fill="none"/></svg>
<div class="a" style="left:1571px;top:912.4px;width:924px;height:57.7px;border:1.8px solid #fca130;border-radius:5px;background:#fdf2e6;box-shadow:0 0 3px rgba(0,0,0,0.19)"></div>
<div class="a" style="left:1579px;top:920.4px;width:114.5px;height:41px;border-radius:4px;background:#fca130"></div>
<div class="a" style="left:1619.25px;top:930.9px;font:bold 19.5px/23.4px 'Liberation Sans',sans-serif;color:#ffffff;white-space:nowrap"><span class="fit" style="width:34px">PUT</span></div>
<div class="a" style="left:1707.5px;top:931.8px;font:normal 21px/25.2px 'Liberation Mono',monospace;color:#3b4151;white-space:nowrap;-webkit-text-stroke:0.55px"><span class="fit" style="width:136.5px">/categories/{id}</span></div>
<div class="a" style="left:1859.5px;top:930.9px;font:normal 20.5px/24.6px 'Liberation Sans',sans-serif;color:#3b4151;white-space:nowrap"><span class="fit" style="width:156px">Update a category</span></div>
<svg style="left:2451px;top:932.4px" width="27" height="17" viewBox="0 0 27 17"><path d="M2 2.5 L13.5 14 L25 2.5" stroke="#111" stroke-width="2.4" fill="none"/></svg>
<div class="a" style="left:1571px;top:991.9px;width:924px;height:57.7px;border:1.8px solid #f93e3e;border-radius:5px;background:#fbe8e8;box-shadow:0 0 3px rgba(0,0,0,0.19)"></div>
<div class="a" style="left:1579px;top:999.9px;width:114.5px;height:41px;border-radius:4px;background:#f93e3e"></div>
<div class="a" style="left:1604.25px;top:1010.4px;font:bold 19.5px/23.4px 'Liberation Sans',sans-serif;color:#ffffff;white-space:nowrap"><span class="fit" style="width:64px">DELETE</span></div>
<div class="a" style="left:1707.5px;top:1011.3px;font:normal 21px/25.2px 'Liberation Mono',monospace;color:#3b4151;white-space:nowrap;-webkit-text-stroke:0.55px"><span class="fit" style="width:136.5px">/categories/{id}</span></div>
<div class="a" style="left:1859.5px;top:1010.5px;font:normal 20.5px/24.6px 'Liberation Sans',sans-serif;color:#3b4151;white-space:nowrap"><span class="fit" style="width:148.5px">Delete a category</span></div>
<svg style="left:2451px;top:1011.9px" width="27" height="17" viewBox="0 0 27 17"><path d="M2 2.5 L13.5 14 L25 2.5" stroke="#111" stroke-width="2.4" fill="none"/></svg>
<div class="a" style="left:1571px;top:1071.5px;width:924px;height:57.7px;border:1.8px solid #61affe;border-radius:5px;background:#ecf4fd;box-shadow:0 0 3px rgba(0,0,0,0.19)"></div>
<div class="a" style="left:1579px;top:1079.5px;width:114.5px;height:41px;border-radius:4px;background:#61affe"></div>
<div class="a" style="left:1619.5px;top:1090.0px;font:bold 19.5px/23.4px 'Liberation Sans',sans-serif;color:#ffffff;white-space:nowrap"><span class="fit" style="width:33.5px">GET</span></div>
<div class="a" style="left:1707.5px;top:1090.9px;font:normal 21px/25.2px 'Liberation Mono',monospace;color:#3b4151;white-space:nowrap;-webkit-text-stroke:0.55px"><span class="fit" style="width:76.5px">/products</span></div>
<div class="a" style="left:1799.5px;top:1090.0px;font:normal 20.5px/24.6px 'Liberation Sans',sans-serif;color:#3b4151;white-space:nowrap"><span class="fit" style="width:136px">Get all products</span></div>
<svg style="left:2451px;top:1091.5px" width="27" height="17" viewBox="0 0 27 17"><path d="M2 2.5 L13.5 14 L25 2.5" stroke="#111" stroke-width="2.4" fill="none"/></svg>
<div class="a" style="left:1571px;top:1151.0px;width:924px;height:57.7px;border:1.8px solid #49cc90;border-radius:5px;background:#e8f6ef;box-shadow:0 0 3px rgba(0,0,0,0.19)"></div>
<div class="a" style="left:1579px;top:1159.0px;width:114.5px;height:41px;border-radius:4px;background:#49cc90"></div>
<div class="a" style="left:1614.0px;top:1169.5px;font:bold 19.5px/23.4px 'Liberation Sans',sans-serif;color:#ffffff;white-space:nowrap"><span class="fit" style="width:44.5px">POST</span></div>
<div class="a" style="left:1707.5px;top:1170.4px;font:normal 21px/25.2px 'Liberation Mono',monospace;color:#3b4151;white-space:nowrap;-webkit-text-stroke:0.55px"><span class="fit" style="width:76.5px">/products</span></div>
<div class="a" style="left:1799.5px;top:1169.6px;font:normal 20.5px/24.6px 'Liberation Sans',sans-serif;color:#3b4151;white-space:nowrap"><span class="fit" style="width:184px">Create a new product</span></div>
<svg style="left:2451px;top:1171.0px" width="27" height="17" viewBox="0 0 27 17"><path d="M2 2.5 L13.5 14 L25 2.5" stroke="#111" stroke-width="2.4" fill="none"/></svg><script>document.querySelectorAll('.fit').forEach(function(e){var w=parseFloat(e.style.width);e.style.width='auto';var r=e.getBoundingClientRect().width;e.style.width=w+'px';if(r>0){e.style.transform='scaleX('+(w/r)+')';e.style.width=r+'px';}});</script></body></html>
